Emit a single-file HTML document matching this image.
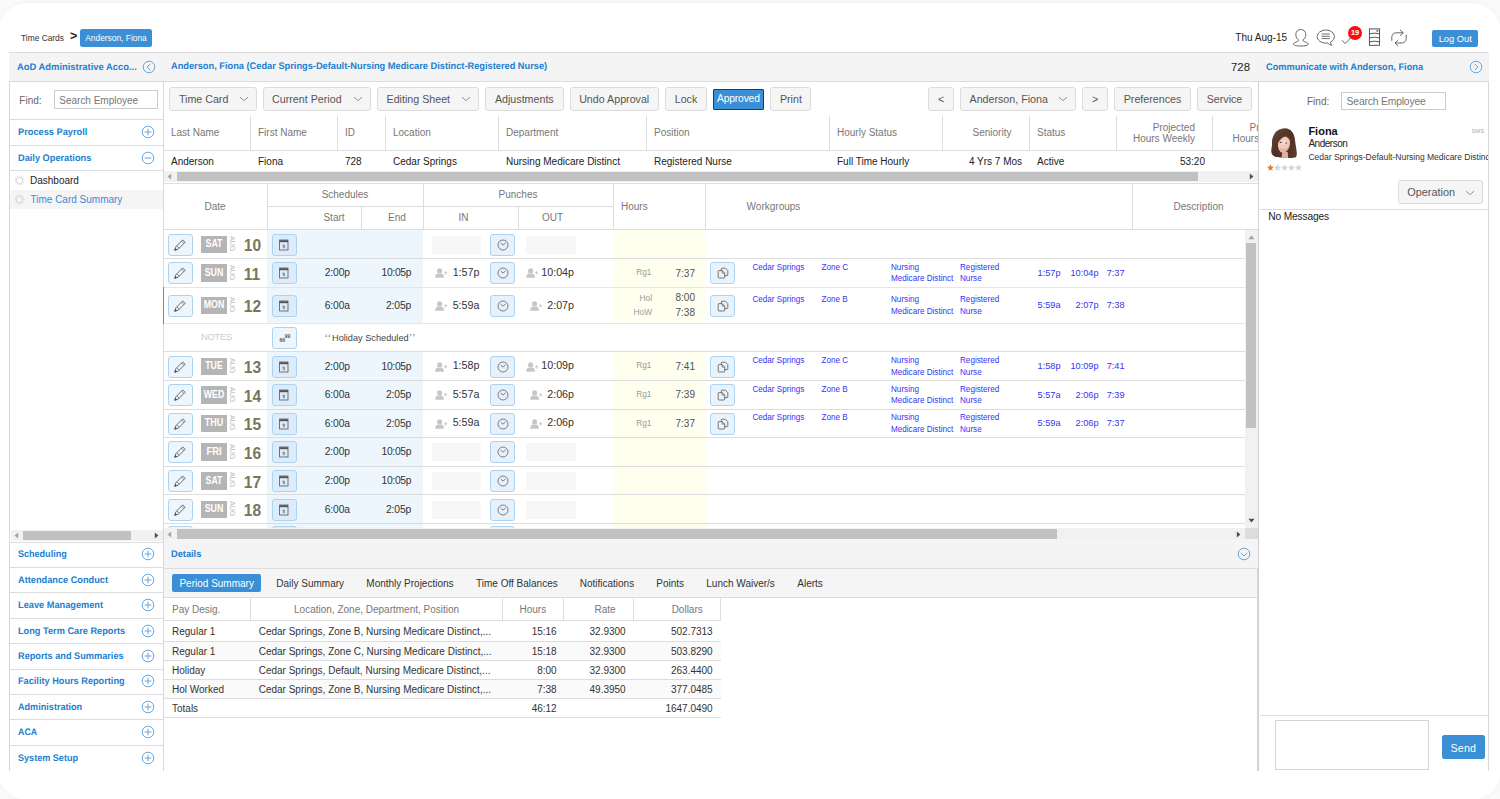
<!DOCTYPE html>
<html lang="en"><head><meta charset="utf-8"><title>Time Cards - Anderson, Fiona</title>
<style>html,body{margin:0;padding:0}body{width:1500px;height:799px;overflow:hidden;background:#fafafa;font-family:"Liberation Sans", sans-serif;position:relative}#card{position:absolute;left:-2px;top:3px;width:1503px;height:797px;background:#fff;border-radius:30px;box-shadow:0 0 7px rgba(0,0,0,.045)}div{box-sizing:content-box}</style></head><body>
<div id="card"></div>
<div style="position:absolute;top:31.00px;line-height:14px;font-size:8.4px;color:#333;white-space:nowrap;left:21.00px;">Time Cards</div>
<div style="position:absolute;top:29.20px;line-height:14px;font-size:12.5px;color:#222;white-space:nowrap;font-weight:bold;left:70.00px;">&gt;</div>
<div style="position:absolute;left:80.00px;top:29.00px;width:72.00px;height:18.40px;background:#3a8fd6;border-radius:2.5px;"></div>
<div style="position:absolute;top:31.30px;line-height:14px;font-size:8.4px;color:#fff;white-space:nowrap;left:-84.00px;width:400px;text-align:center;">Anderson, Fiona</div>
<div style="position:absolute;top:31.20px;line-height:14px;font-size:10px;color:#222;white-space:nowrap;left:1235.30px;">Thu Aug-15</div>
<svg style="position:absolute;left:1292.00px;top:28.50px;" width="17" height="18" viewBox="0 0 17 18"><path d="M8.800 0.500C12 0.500 13.800 2.800 13.800 5.600C13.800 8.200 12.400 10 11.200 10.600V11.600C11.200 12.200 12 12.500 13.400 13C15.200 13.600 16.200 14.300 16.200 15.200C16.200 16.400 13 17 8.800 17C4.600 17 1.400 16.400 1.400 15.200C1.400 14.300 2.400 13.600 4.200 13C5.600 12.500 6.400 12.200 6.400 11.600V10.600C5.200 10 3.800 8.200 3.800 5.600C3.800 2.800 5.600 0.500 8.800 0.500Z" fill="none" stroke="#555" stroke-width="0.9"/></svg>
<svg style="position:absolute;left:1315.50px;top:28.50px;" width="20" height="18" viewBox="0 0 20 18"><g fill="none" stroke="#555" stroke-width="0.9"><path d="M9.800 1.100c4.800 0 8.600 2.900 8.600 6.500 0 2.300-1.500 4.300-3.800 5.500 0 1.200 0.300 2.300 1.100 3.200-1.600-0.300-3-1.100-3.900-2.300-0.600 0.100-1.300 0.100-2 0.100-4.800 0-8.600-2.900-8.600-6.500s3.800-6.500 8.600-6.500z"/><path d="M5.500 5h8.400M5.500 7.300h8.400M5.500 9.600h8.400" stroke-width="0.85"/></g></svg>
<svg style="position:absolute;left:1341.00px;top:36.00px;" width="12" height="9" viewBox="0 0 12 9"><path d="M1 4.200L4.200 7.600L10.600 0.800" fill="none" stroke="#555" stroke-width="0.9"/></svg>
<div style="position:absolute;left:1348.00px;top:25.90px;width:14.00px;height:14.00px;background:#fb0d12;border-radius:50%;"></div>
<div style="position:absolute;top:26.20px;line-height:14px;font-size:7.4px;color:#fff;white-space:nowrap;font-weight:bold;left:1155.00px;width:400px;text-align:center;">19</div>
<svg style="position:absolute;left:1368.00px;top:28.20px;" width="13" height="18" viewBox="0 0 13 18"><g fill="none" stroke="#444" stroke-width="0.9"><rect x="1.400" y="0.900" width="10.200" height="16.400"/><path d="M1.400 5.800q5.100-1.400 10.200 0M1.400 9.900q5.100-1.400 10.200 0M1.400 13.900q5.100-1.400 10.200 0"/><path d="M8.400 2.900h1.900" stroke-width="1.100" stroke="#222"/></g></svg>
<svg style="position:absolute;left:1390.00px;top:28.50px;" width="18" height="18" viewBox="0 0 18 18"><g fill="none" stroke="#555" stroke-width="0.9" stroke-linecap="round" stroke-linejoin="round"><path d="M1.800 11.400V8.200a4.400 4.400 0 0 1 4.400-4.400h6.600"/><path d="M10.300 1.100l2.900 2.700-2.900 2.700"/><path d="M16.200 6.200v3.400a4.400 4.400 0 0 1-4.400 4.400H5.400"/><path d="M7.900 11.300l-2.900 2.700 2.900 2.700"/></g></svg>
<div style="position:absolute;left:1432.00px;top:30.30px;width:46.00px;height:17.00px;background:#3a8fd6;border-radius:2px;"></div>
<div style="position:absolute;top:31.90px;line-height:14px;font-size:9.3px;color:#fff;white-space:nowrap;left:1255.20px;width:400px;text-align:center;">Log Out</div>
<div style="position:absolute;left:9.00px;top:52.00px;width:1480.00px;height:29.00px;background:#f4f4f4;border-top:1px solid #ddd;box-sizing:border-box;"></div>
<div style="position:absolute;top:60.50px;line-height:14px;font-size:9.6px;color:#2180d1;white-space:nowrap;font-weight:bold;text-rendering:geometricPrecision;transform:scaleX(0.978);transform-origin:0 50%;left:16.70px;">AoD Administrative Acco...</div>
<svg style="position:absolute;left:142.40px;top:59.80px;" width="14" height="14" viewBox="0 0 14 14"><g fill="none" stroke="#6aa5db" stroke-width="1"><circle cx="7" cy="7" r="5.800"/><path d="M8.3 3.8L5.2 7l3.1 3.2"/></g></svg>
<div style="position:absolute;top:60.30px;line-height:14px;font-size:9.6px;color:#2180d1;white-space:nowrap;font-weight:bold;text-rendering:geometricPrecision;transform:scaleX(0.964);transform-origin:0 50%;left:171.00px;">Anderson, Fiona (Cedar Springs-Default-Nursing Medicare Distinct-Registered Nurse)</div>
<div style="position:absolute;top:59.80px;line-height:14px;font-size:11.4px;color:#222;white-space:nowrap;left:850.00px;width:400px;text-align:right;">728</div>
<div style="position:absolute;top:60.50px;line-height:14px;font-size:9.6px;color:#2180d1;white-space:nowrap;font-weight:bold;text-rendering:geometricPrecision;transform:scaleX(0.962);transform-origin:0 50%;left:1266.00px;">Communicate with Anderson, Fiona</div>
<svg style="position:absolute;left:1468.60px;top:59.90px;" width="14" height="14" viewBox="0 0 14 14"><g fill="none" stroke="#6aa5db" stroke-width="1"><circle cx="7" cy="7" r="5.800"/><path d="M5.7 3.8L8.8 7l-3.1 3.2"/></g></svg>
<div style="position:absolute;left:9.00px;top:81.00px;width:154.60px;height:689.50px;box-sizing:border-box;border:1px solid #d8d8d8;border-bottom:none;background:#fff;"></div>
<div style="position:absolute;top:93.50px;line-height:14px;font-size:10px;color:#666;white-space:nowrap;left:19.30px;">Find:</div>
<div style="position:absolute;left:53.60px;top:90.30px;width:104.20px;height:18.40px;box-sizing:border-box;border:1px solid #ccc;background:#fff;"></div>
<div style="position:absolute;top:93.60px;line-height:14px;font-size:10px;color:#777;white-space:nowrap;letter-spacing:-0.010px;left:59.30px;">Search Employee</div>
<div style="position:absolute;left:10.00px;top:119.40px;width:153.00px;height:1.00px;background:#ddd;"></div>
<div style="position:absolute;top:126.10px;line-height:14px;font-size:9.6px;color:#2180d1;white-space:nowrap;font-weight:bold;text-rendering:geometricPrecision;transform:scaleX(0.962);transform-origin:0 50%;left:17.80px;">Process Payroll</div>
<svg style="position:absolute;left:141.40px;top:125.20px;" width="14" height="14" viewBox="0 0 14 14"><g fill="none" stroke="#6aa5db" stroke-width="1"><circle cx="7" cy="7" r="5.800"/><path d="M3.6 7h6.8M7 3.6v6.8"/></g></svg>
<div style="position:absolute;left:10.00px;top:144.80px;width:153.00px;height:1.00px;background:#ddd;"></div>
<div style="position:absolute;top:151.50px;line-height:14px;font-size:9.6px;color:#2180d1;white-space:nowrap;font-weight:bold;text-rendering:geometricPrecision;transform:scaleX(0.961);transform-origin:0 50%;left:17.80px;">Daily Operations</div>
<svg style="position:absolute;left:141.40px;top:150.60px;" width="14" height="14" viewBox="0 0 14 14"><g fill="none" stroke="#6aa5db" stroke-width="1"><circle cx="7" cy="7" r="5.800"/><path d="M3.6 7h6.8"/></g></svg>
<div style="position:absolute;left:10.00px;top:170.20px;width:153.00px;height:1.00px;background:#ddd;"></div>
<svg style="position:absolute;left:13.50px;top:174.50px;" width="11" height="11" viewBox="0 0 11 11"><g fill="none" stroke="#c8c8c8" stroke-width="0.7"><circle cx="5.500" cy="5.500" r="3.200"/><path d="M5.500 0.600v1.400" transform="rotate(0 5.500 5.500)"/><path d="M5.500 0.600v1.400" transform="rotate(30 5.500 5.500)"/><path d="M5.500 0.600v1.400" transform="rotate(60 5.500 5.500)"/><path d="M5.500 0.600v1.400" transform="rotate(90 5.500 5.500)"/><path d="M5.500 0.600v1.400" transform="rotate(120 5.500 5.500)"/><path d="M5.500 0.600v1.400" transform="rotate(150 5.500 5.500)"/><path d="M5.500 0.600v1.400" transform="rotate(180 5.500 5.500)"/><path d="M5.500 0.600v1.400" transform="rotate(210 5.500 5.500)"/><path d="M5.500 0.600v1.400" transform="rotate(240 5.500 5.500)"/><path d="M5.500 0.600v1.400" transform="rotate(270 5.500 5.500)"/><path d="M5.500 0.600v1.400" transform="rotate(300 5.500 5.500)"/><path d="M5.500 0.600v1.400" transform="rotate(330 5.500 5.500)"/></g></svg>
<div style="position:absolute;top:173.90px;line-height:14px;font-size:10px;color:#222;white-space:nowrap;left:30.00px;">Dashboard</div>
<div style="position:absolute;left:10.00px;top:190.00px;width:153.00px;height:19.00px;background:#f5f5f5;"></div>
<svg style="position:absolute;left:13.50px;top:193.80px;" width="11" height="11" viewBox="0 0 11 11"><g fill="none" stroke="#c8c8c8" stroke-width="0.7"><circle cx="5.500" cy="5.500" r="3.200"/><path d="M5.500 0.600v1.400" transform="rotate(0 5.500 5.500)"/><path d="M5.500 0.600v1.400" transform="rotate(30 5.500 5.500)"/><path d="M5.500 0.600v1.400" transform="rotate(60 5.500 5.500)"/><path d="M5.500 0.600v1.400" transform="rotate(90 5.500 5.500)"/><path d="M5.500 0.600v1.400" transform="rotate(120 5.500 5.500)"/><path d="M5.500 0.600v1.400" transform="rotate(150 5.500 5.500)"/><path d="M5.500 0.600v1.400" transform="rotate(180 5.500 5.500)"/><path d="M5.500 0.600v1.400" transform="rotate(210 5.500 5.500)"/><path d="M5.500 0.600v1.400" transform="rotate(240 5.500 5.500)"/><path d="M5.500 0.600v1.400" transform="rotate(270 5.500 5.500)"/><path d="M5.500 0.600v1.400" transform="rotate(300 5.500 5.500)"/><path d="M5.500 0.600v1.400" transform="rotate(330 5.500 5.500)"/></g></svg>
<div style="position:absolute;top:193.30px;line-height:14px;font-size:10px;color:#3b89d5;white-space:nowrap;left:30.50px;">Time Card Summary</div>
<div style="position:absolute;left:10.50px;top:529.60px;width:152.00px;height:11.00px;background:#f1f1f1;"></div>
<div style="position:absolute;left:23.00px;top:530.60px;width:108.00px;height:9.00px;background:#c1c1c1;"></div>
<svg style="position:absolute;left:14.00px;top:531.60px;" width="5" height="7" viewBox="0 0 5 7"><path d="M4.200 0.400L0.600 3.500l3.600 3.100z" fill="#a3a3a3"/></svg>
<svg style="position:absolute;left:153.60px;top:531.60px;" width="5" height="7" viewBox="0 0 5 7"><path d="M0.800 0.400L4.400 3.500l-3.600 3.100z" fill="#505050"/></svg>
<div style="position:absolute;left:10.00px;top:541.60px;width:153.00px;height:1.00px;background:#ddd;"></div>
<div style="position:absolute;top:548.30px;line-height:14px;font-size:9.6px;color:#2180d1;white-space:nowrap;font-weight:bold;text-rendering:geometricPrecision;transform:scaleX(0.942);transform-origin:0 50%;left:17.80px;">Scheduling</div>
<svg style="position:absolute;left:141.40px;top:547.40px;" width="14" height="14" viewBox="0 0 14 14"><g fill="none" stroke="#6aa5db" stroke-width="1"><circle cx="7" cy="7" r="5.800"/><path d="M3.6 7h6.8M7 3.6v6.8"/></g></svg>
<div style="position:absolute;left:10.00px;top:567.00px;width:153.00px;height:1.00px;background:#ddd;"></div>
<div style="position:absolute;top:573.70px;line-height:14px;font-size:9.6px;color:#2180d1;white-space:nowrap;font-weight:bold;text-rendering:geometricPrecision;transform:scaleX(0.960);transform-origin:0 50%;left:17.80px;">Attendance Conduct</div>
<svg style="position:absolute;left:141.40px;top:572.80px;" width="14" height="14" viewBox="0 0 14 14"><g fill="none" stroke="#6aa5db" stroke-width="1"><circle cx="7" cy="7" r="5.800"/><path d="M3.6 7h6.8M7 3.6v6.8"/></g></svg>
<div style="position:absolute;left:10.00px;top:592.40px;width:153.00px;height:1.00px;background:#ddd;"></div>
<div style="position:absolute;top:599.10px;line-height:14px;font-size:9.6px;color:#2180d1;white-space:nowrap;font-weight:bold;text-rendering:geometricPrecision;transform:scaleX(0.961);transform-origin:0 50%;left:17.80px;">Leave Management</div>
<svg style="position:absolute;left:141.40px;top:598.20px;" width="14" height="14" viewBox="0 0 14 14"><g fill="none" stroke="#6aa5db" stroke-width="1"><circle cx="7" cy="7" r="5.800"/><path d="M3.6 7h6.8M7 3.6v6.8"/></g></svg>
<div style="position:absolute;left:10.00px;top:617.80px;width:153.00px;height:1.00px;background:#ddd;"></div>
<div style="position:absolute;top:624.50px;line-height:14px;font-size:9.6px;color:#2180d1;white-space:nowrap;font-weight:bold;text-rendering:geometricPrecision;transform:scaleX(0.959);transform-origin:0 50%;left:17.80px;">Long Term Care Reports</div>
<svg style="position:absolute;left:141.40px;top:623.60px;" width="14" height="14" viewBox="0 0 14 14"><g fill="none" stroke="#6aa5db" stroke-width="1"><circle cx="7" cy="7" r="5.800"/><path d="M3.6 7h6.8M7 3.6v6.8"/></g></svg>
<div style="position:absolute;left:10.00px;top:643.20px;width:153.00px;height:1.00px;background:#ddd;"></div>
<div style="position:absolute;top:649.90px;line-height:14px;font-size:9.6px;color:#2180d1;white-space:nowrap;font-weight:bold;text-rendering:geometricPrecision;transform:scaleX(0.957);transform-origin:0 50%;left:17.80px;">Reports and Summaries</div>
<svg style="position:absolute;left:141.40px;top:649.00px;" width="14" height="14" viewBox="0 0 14 14"><g fill="none" stroke="#6aa5db" stroke-width="1"><circle cx="7" cy="7" r="5.800"/><path d="M3.6 7h6.8M7 3.6v6.8"/></g></svg>
<div style="position:absolute;left:10.00px;top:668.60px;width:153.00px;height:1.00px;background:#ddd;"></div>
<div style="position:absolute;top:675.30px;line-height:14px;font-size:9.6px;color:#2180d1;white-space:nowrap;font-weight:bold;text-rendering:geometricPrecision;transform:scaleX(0.957);transform-origin:0 50%;left:17.80px;">Facility Hours Reporting</div>
<svg style="position:absolute;left:141.40px;top:674.40px;" width="14" height="14" viewBox="0 0 14 14"><g fill="none" stroke="#6aa5db" stroke-width="1"><circle cx="7" cy="7" r="5.800"/><path d="M3.6 7h6.8M7 3.6v6.8"/></g></svg>
<div style="position:absolute;left:10.00px;top:694.00px;width:153.00px;height:1.00px;background:#ddd;"></div>
<div style="position:absolute;top:700.70px;line-height:14px;font-size:9.6px;color:#2180d1;white-space:nowrap;font-weight:bold;text-rendering:geometricPrecision;transform:scaleX(0.948);transform-origin:0 50%;left:17.80px;">Administration</div>
<svg style="position:absolute;left:141.40px;top:699.80px;" width="14" height="14" viewBox="0 0 14 14"><g fill="none" stroke="#6aa5db" stroke-width="1"><circle cx="7" cy="7" r="5.800"/><path d="M3.6 7h6.8M7 3.6v6.8"/></g></svg>
<div style="position:absolute;left:10.00px;top:719.40px;width:153.00px;height:1.00px;background:#ddd;"></div>
<div style="position:absolute;top:726.10px;line-height:14px;font-size:9.6px;color:#2180d1;white-space:nowrap;font-weight:bold;text-rendering:geometricPrecision;transform:scaleX(0.923);transform-origin:0 50%;left:17.80px;">ACA</div>
<svg style="position:absolute;left:141.40px;top:725.20px;" width="14" height="14" viewBox="0 0 14 14"><g fill="none" stroke="#6aa5db" stroke-width="1"><circle cx="7" cy="7" r="5.800"/><path d="M3.6 7h6.8M7 3.6v6.8"/></g></svg>
<div style="position:absolute;left:10.00px;top:744.80px;width:153.00px;height:1.00px;background:#ddd;"></div>
<div style="position:absolute;top:751.50px;line-height:14px;font-size:9.6px;color:#2180d1;white-space:nowrap;font-weight:bold;text-rendering:geometricPrecision;transform:scaleX(0.946);transform-origin:0 50%;left:17.80px;">System Setup</div>
<svg style="position:absolute;left:141.40px;top:750.60px;" width="14" height="14" viewBox="0 0 14 14"><g fill="none" stroke="#6aa5db" stroke-width="1"><circle cx="7" cy="7" r="5.800"/><path d="M3.6 7h6.8M7 3.6v6.8"/></g></svg>
<div style="position:absolute;left:163.00px;top:81.00px;width:1.00px;height:689.50px;background:#d8d8d8;"></div>
<div style="position:absolute;left:163.00px;top:81.00px;width:1095.00px;height:1.00px;background:#ddd;"></div>
<div style="position:absolute;left:169.40px;top:87.00px;width:87.60px;height:23.60px;box-sizing:border-box;border:1px solid #dcdcdc;background:#f5f5f5;border-radius:3px;"></div>
<div style="position:absolute;top:92.00px;line-height:14px;font-size:10.7px;color:#555;white-space:nowrap;left:178.90px;">Time Card</div>
<svg style="position:absolute;left:239.00px;top:96.40px;" width="10" height="6" viewBox="0 0 10 6"><path d="M1 1.2L5 4.6L9 1.2" fill="none" stroke="#888" stroke-width="0.9"/></svg>
<div style="position:absolute;left:262.60px;top:87.00px;width:108.40px;height:23.60px;box-sizing:border-box;border:1px solid #dcdcdc;background:#f5f5f5;border-radius:3px;"></div>
<div style="position:absolute;top:92.00px;line-height:14px;font-size:10.7px;color:#555;white-space:nowrap;left:272.10px;">Current Period</div>
<svg style="position:absolute;left:353.00px;top:96.40px;" width="10" height="6" viewBox="0 0 10 6"><path d="M1 1.2L5 4.6L9 1.2" fill="none" stroke="#888" stroke-width="0.9"/></svg>
<div style="position:absolute;left:377.00px;top:87.00px;width:102.00px;height:23.60px;box-sizing:border-box;border:1px solid #dcdcdc;background:#f5f5f5;border-radius:3px;"></div>
<div style="position:absolute;top:92.00px;line-height:14px;font-size:10.7px;color:#555;white-space:nowrap;left:386.50px;">Editing Sheet</div>
<svg style="position:absolute;left:461.00px;top:96.40px;" width="10" height="6" viewBox="0 0 10 6"><path d="M1 1.2L5 4.6L9 1.2" fill="none" stroke="#888" stroke-width="0.9"/></svg>
<div style="position:absolute;left:485.00px;top:87.00px;width:78.60px;height:23.60px;box-sizing:border-box;border:1px solid #dcdcdc;background:#f5f5f5;border-radius:3px;"></div>
<div style="position:absolute;top:92.00px;line-height:14px;font-size:10.7px;color:#555;white-space:nowrap;left:324.30px;width:400px;text-align:center;">Adjustments</div>
<div style="position:absolute;left:569.60px;top:87.00px;width:89.20px;height:23.60px;box-sizing:border-box;border:1px solid #dcdcdc;background:#f5f5f5;border-radius:3px;"></div>
<div style="position:absolute;top:92.00px;line-height:14px;font-size:10.7px;color:#555;white-space:nowrap;left:414.20px;width:400px;text-align:center;">Undo Approval</div>
<div style="position:absolute;left:665.00px;top:87.00px;width:42.00px;height:23.60px;box-sizing:border-box;border:1px solid #dcdcdc;background:#f5f5f5;border-radius:3px;"></div>
<div style="position:absolute;top:92.00px;line-height:14px;font-size:10.7px;color:#555;white-space:nowrap;left:486.00px;width:400px;text-align:center;">Lock</div>
<div style="position:absolute;left:713.00px;top:89.00px;width:51.00px;height:21.00px;box-sizing:border-box;border:1px solid #2a3a4a;background:#3a8fd6;border-radius:1px;"></div>
<div style="position:absolute;top:92.40px;line-height:14px;font-size:10.3px;color:#fff;white-space:nowrap;letter-spacing:-0.185px;left:538.40px;width:400px;text-align:center;">Approved</div>
<div style="position:absolute;left:770.40px;top:87.00px;width:41.00px;height:23.60px;box-sizing:border-box;border:1px solid #dcdcdc;background:#f5f5f5;border-radius:3px;"></div>
<div style="position:absolute;top:92.00px;line-height:14px;font-size:10.7px;color:#555;white-space:nowrap;left:590.90px;width:400px;text-align:center;">Print</div>
<div style="position:absolute;left:928.40px;top:87.00px;width:25.20px;height:23.60px;box-sizing:border-box;border:1px solid #dcdcdc;background:#f5f5f5;border-radius:3px;"></div>
<div style="position:absolute;top:92.00px;line-height:14px;font-size:10.7px;color:#555;white-space:nowrap;left:741.00px;width:400px;text-align:center;">&lt;</div>
<div style="position:absolute;left:960.00px;top:87.00px;width:116.00px;height:23.60px;box-sizing:border-box;border:1px solid #dcdcdc;background:#f5f5f5;border-radius:3px;"></div>
<div style="position:absolute;top:92.00px;line-height:14px;font-size:10.7px;color:#555;white-space:nowrap;left:969.50px;">Anderson, Fiona</div>
<svg style="position:absolute;left:1058.00px;top:96.40px;" width="10" height="6" viewBox="0 0 10 6"><path d="M1 1.2L5 4.6L9 1.2" fill="none" stroke="#888" stroke-width="0.9"/></svg>
<div style="position:absolute;left:1082.40px;top:87.00px;width:25.20px;height:23.60px;box-sizing:border-box;border:1px solid #dcdcdc;background:#f5f5f5;border-radius:3px;"></div>
<div style="position:absolute;top:92.00px;line-height:14px;font-size:10.7px;color:#555;white-space:nowrap;left:895.00px;width:400px;text-align:center;">&gt;</div>
<div style="position:absolute;left:1114.00px;top:87.00px;width:77.00px;height:23.60px;box-sizing:border-box;border:1px solid #dcdcdc;background:#f5f5f5;border-radius:3px;"></div>
<div style="position:absolute;top:92.00px;line-height:14px;font-size:10.7px;color:#555;white-space:nowrap;left:952.50px;width:400px;text-align:center;">Preferences</div>
<div style="position:absolute;left:1197.20px;top:87.00px;width:54.60px;height:23.60px;box-sizing:border-box;border:1px solid #dcdcdc;background:#f5f5f5;border-radius:3px;"></div>
<div style="position:absolute;top:92.00px;line-height:14px;font-size:10.7px;color:#555;white-space:nowrap;left:1024.50px;width:400px;text-align:center;">Service</div>
<div style="position:absolute;top:126.00px;line-height:14px;font-size:10px;color:#777;white-space:nowrap;left:171.00px;">Last Name</div>
<div style="position:absolute;top:154.70px;line-height:14px;font-size:10px;color:#222;white-space:nowrap;left:171.00px;">Anderson</div>
<div style="position:absolute;left:250.00px;top:116.00px;width:1.00px;height:34.00px;background:#ddd;"></div>
<div style="position:absolute;top:126.00px;line-height:14px;font-size:10px;color:#777;white-space:nowrap;left:258.00px;">First Name</div>
<div style="position:absolute;top:154.70px;line-height:14px;font-size:10px;color:#222;white-space:nowrap;left:258.00px;">Fiona</div>
<div style="position:absolute;left:337.00px;top:116.00px;width:1.00px;height:34.00px;background:#ddd;"></div>
<div style="position:absolute;top:126.00px;line-height:14px;font-size:10px;color:#777;white-space:nowrap;left:345.00px;">ID</div>
<div style="position:absolute;top:154.70px;line-height:14px;font-size:10px;color:#222;white-space:nowrap;left:345.00px;">728</div>
<div style="position:absolute;left:385.00px;top:116.00px;width:1.00px;height:34.00px;background:#ddd;"></div>
<div style="position:absolute;top:126.00px;line-height:14px;font-size:10px;color:#777;white-space:nowrap;left:393.00px;">Location</div>
<div style="position:absolute;top:154.70px;line-height:14px;font-size:10px;color:#222;white-space:nowrap;left:393.00px;">Cedar Springs</div>
<div style="position:absolute;left:498.00px;top:116.00px;width:1.00px;height:34.00px;background:#ddd;"></div>
<div style="position:absolute;top:126.00px;line-height:14px;font-size:10px;color:#777;white-space:nowrap;left:506.00px;">Department</div>
<div style="position:absolute;top:154.70px;line-height:14px;font-size:10px;color:#222;white-space:nowrap;left:506.00px;">Nursing Medicare Distinct</div>
<div style="position:absolute;left:646.00px;top:116.00px;width:1.00px;height:34.00px;background:#ddd;"></div>
<div style="position:absolute;top:126.00px;line-height:14px;font-size:10px;color:#777;white-space:nowrap;left:654.00px;">Position</div>
<div style="position:absolute;top:154.70px;line-height:14px;font-size:10px;color:#222;white-space:nowrap;left:654.00px;">Registered Nurse</div>
<div style="position:absolute;left:829.00px;top:116.00px;width:1.00px;height:34.00px;background:#ddd;"></div>
<div style="position:absolute;top:126.00px;line-height:14px;font-size:10px;color:#777;white-space:nowrap;left:837.00px;">Hourly Status</div>
<div style="position:absolute;top:154.70px;line-height:14px;font-size:10px;color:#222;white-space:nowrap;left:837.00px;">Full Time Hourly</div>
<div style="position:absolute;left:942.00px;top:116.00px;width:1.00px;height:34.00px;background:#ddd;"></div>
<div style="position:absolute;top:126.00px;line-height:14px;font-size:10px;color:#777;white-space:nowrap;left:792.00px;width:400px;text-align:center;">Seniority</div>
<div style="position:absolute;top:154.70px;line-height:14px;font-size:10px;color:#222;white-space:nowrap;left:795.50px;width:400px;text-align:center;">4 Yrs 7 Mos</div>
<div style="position:absolute;left:1029.00px;top:116.00px;width:1.00px;height:34.00px;background:#ddd;"></div>
<div style="position:absolute;top:126.00px;line-height:14px;font-size:10px;color:#777;white-space:nowrap;left:1037.00px;">Status</div>
<div style="position:absolute;top:154.70px;line-height:14px;font-size:10px;color:#222;white-space:nowrap;left:1037.00px;">Active</div>
<div style="position:absolute;left:1116.00px;top:116.00px;width:1.00px;height:34.00px;background:#ddd;"></div>
<div style="position:absolute;left:1212.00px;top:116.00px;width:1.00px;height:34.00px;background:#ddd;"></div>
<div style="position:absolute;top:120.70px;line-height:14px;font-size:10px;color:#777;white-space:nowrap;left:795.00px;width:400px;text-align:right;">Projected</div>
<div style="position:absolute;top:132.10px;line-height:14px;font-size:10px;color:#777;white-space:nowrap;left:795.00px;width:400px;text-align:right;">Hours Weekly</div>
<div style="position:absolute;top:154.70px;line-height:14px;font-size:10px;color:#222;white-space:nowrap;left:805.00px;width:400px;text-align:right;">53:20</div>
<div style="position:absolute;left:1213px;top:116px;width:45px;height:34px;overflow:hidden">
<div style="position:absolute;top:4.70px;line-height:14px;font-size:10px;color:#777;white-space:nowrap;left:36.50px;">Pr</div>
<div style="position:absolute;top:16.10px;line-height:14px;font-size:10px;color:#777;white-space:nowrap;left:19.50px;">Hours</div>
</div>
<div style="position:absolute;left:163.00px;top:150.00px;width:1095.00px;height:1.00px;background:#ddd;"></div>
<div style="position:absolute;left:164.00px;top:171.00px;width:1094.00px;height:10.60px;background:#f1f1f1;"></div>
<div style="position:absolute;left:176.60px;top:172.00px;width:1021.40px;height:8.60px;background:#c1c1c1;"></div>
<svg style="position:absolute;left:166.50px;top:172.80px;" width="5" height="7" viewBox="0 0 5 7"><path d="M4.200 0.400L0.600 3.500l3.600 3.100z" fill="#a3a3a3"/></svg>
<svg style="position:absolute;left:1249.00px;top:172.80px;" width="5" height="7" viewBox="0 0 5 7"><path d="M0.800 0.400L4.400 3.500l-3.600 3.100z" fill="#505050"/></svg>
<div style="position:absolute;left:163.00px;top:183.00px;width:1095.00px;height:1.00px;background:#ddd;"></div>
<div style="position:absolute;left:267.00px;top:183.00px;width:1.00px;height:46.40px;background:#ddd;"></div>
<div style="position:absolute;left:423.00px;top:183.00px;width:1.00px;height:46.40px;background:#ddd;"></div>
<div style="position:absolute;left:613.00px;top:183.00px;width:1.00px;height:46.40px;background:#ddd;"></div>
<div style="position:absolute;left:705.40px;top:183.00px;width:1.00px;height:46.40px;background:#ddd;"></div>
<div style="position:absolute;left:1131.60px;top:183.00px;width:1.00px;height:46.40px;background:#ddd;"></div>
<div style="position:absolute;left:267.00px;top:206.00px;width:346.00px;height:1.00px;background:#ddd;"></div>
<div style="position:absolute;left:361.00px;top:206.00px;width:1.00px;height:23.40px;background:#ddd;"></div>
<div style="position:absolute;left:518.00px;top:206.00px;width:1.00px;height:23.40px;background:#ddd;"></div>
<div style="position:absolute;left:163.00px;top:229.40px;width:1095.00px;height:1.00px;background:#ddd;"></div>
<div style="position:absolute;top:200.10px;line-height:14px;font-size:10px;color:#777;white-space:nowrap;left:15.00px;width:400px;text-align:center;">Date</div>
<div style="position:absolute;top:188.30px;line-height:14px;font-size:10px;color:#777;white-space:nowrap;left:145.00px;width:400px;text-align:center;">Schedules</div>
<div style="position:absolute;top:211.00px;line-height:14px;font-size:10px;color:#777;white-space:nowrap;left:134.00px;width:400px;text-align:center;">Start</div>
<div style="position:absolute;top:211.00px;line-height:14px;font-size:10px;color:#777;white-space:nowrap;left:197.00px;width:400px;text-align:center;">End</div>
<div style="position:absolute;top:188.30px;line-height:14px;font-size:10px;color:#777;white-space:nowrap;left:318.00px;width:400px;text-align:center;">Punches</div>
<div style="position:absolute;top:211.00px;line-height:14px;font-size:10px;color:#777;white-space:nowrap;left:263.50px;width:400px;text-align:center;">IN</div>
<div style="position:absolute;top:211.00px;line-height:14px;font-size:10px;color:#777;white-space:nowrap;left:352.50px;width:400px;text-align:center;">OUT</div>
<div style="position:absolute;top:200.10px;line-height:14px;font-size:10px;color:#777;white-space:nowrap;left:621.00px;">Hours</div>
<div style="position:absolute;top:200.10px;line-height:14px;font-size:10px;color:#777;white-space:nowrap;left:746.60px;">Workgroups</div>
<div style="position:absolute;top:200.10px;line-height:14px;font-size:10px;color:#777;white-space:nowrap;left:1173.50px;">Description</div>
<div style="position:absolute;left:164px;top:230px;width:1081px;height:297.600px;overflow:hidden">
<div style="position:absolute;left:103.40px;top:0.00px;width:155.60px;height:300.00px;background:#eef6fd;"></div>
<div style="position:absolute;left:449.00px;top:0.00px;width:92.80px;height:300.00px;background:#fffff0;"></div>
<div style="position:absolute;left:4.00px;top:4.00px;width:25.00px;height:22.00px;box-sizing:border-box;border:1px solid #add3f1;background:#eef6fd;border-radius:3px;"></div>
<svg style="position:absolute;left:10.30px;top:8.80px;" width="12" height="12" viewBox="0 0 12 12"><g fill="none" stroke="#555" stroke-width="0.85" stroke-linejoin="round"><path d="M8.700 0.900l2.400 2.400L4.300 10.100l-3.500 1.100 1.100-3.500z"/><path d="M7.500 2.100l2.400 2.400M2.900 6.900l2.200 2.200" stroke-width="0.700"/><path d="M0.800 11.200l0.600-1.900 1.300 1.300z" fill="#555"/></g></svg>
<div style="position:absolute;left:37.00px;top:5.60px;width:26.00px;height:17.50px;background:#b5b5b5;"></div>
<div style="position:absolute;top:7.10px;line-height:14px;font-size:10px;color:#fff;white-space:nowrap;font-weight:bold;transform:scaleX(0.882);transform-origin:50% 50%;left:-150.00px;width:400px;text-align:center;">SAT</div>
<div style="position:absolute;left:65.20px;top:5.90px;width:7px;height:17px;writing-mode:vertical-rl;font-size:7.400px;line-height:7px;color:#bdbdbd;white-space:nowrap;letter-spacing:-0.200px">AUG</div>
<div style="position:absolute;top:7.10px;line-height:18px;font-size:15.6px;color:#77775a;white-space:nowrap;font-weight:bold;left:79.80px;">10</div>
<div style="position:absolute;left:107.60px;top:4.00px;width:25.00px;height:22.00px;box-sizing:border-box;border:1px solid #add3f1;background:#dcecfa;border-radius:3px;"></div>
<svg style="position:absolute;left:115.40px;top:9.30px;" width="10" height="12" viewBox="0 0 10 12"><g fill="none" stroke="#555" stroke-width="0.800"><rect x="0.600" y="1" width="8.400" height="10"/><path d="M0.600 2.200h8.400" stroke-width="2"/><path d="M4.300 5.800v3.400M5.500 5.800v3.400" stroke-width="0.600"/><path d="M3.400 6.600l0.900-0.800" stroke-width="0.600"/></g></svg>
<div style="position:absolute;left:326.00px;top:4.00px;width:25.00px;height:22.00px;box-sizing:border-box;border:1px solid #add3f1;background:#e6f1fc;border-radius:3px;"></div>
<svg style="position:absolute;left:332.50px;top:9.20px;" width="12" height="12" viewBox="0 0 12 12"><g fill="none" stroke="#6c6c6c" stroke-width="0.85"><circle cx="6" cy="6" r="5"/><path d="M3.600 4.100L6 6.100l2.600-2.200"/></g></svg>
<div style="position:absolute;left:267.60px;top:5.50px;width:49.40px;height:18.20px;background:#f7f7f7;"></div>
<div style="position:absolute;left:362.00px;top:5.50px;width:49.60px;height:18.20px;background:#f7f7f7;"></div>
<div style="position:absolute;left:4.00px;top:32.00px;width:25.00px;height:22.00px;box-sizing:border-box;border:1px solid #add3f1;background:#eef6fd;border-radius:3px;"></div>
<svg style="position:absolute;left:10.30px;top:36.80px;" width="12" height="12" viewBox="0 0 12 12"><g fill="none" stroke="#555" stroke-width="0.85" stroke-linejoin="round"><path d="M8.700 0.900l2.400 2.400L4.300 10.100l-3.500 1.100 1.100-3.500z"/><path d="M7.500 2.100l2.400 2.400M2.900 6.900l2.200 2.200" stroke-width="0.700"/><path d="M0.800 11.200l0.600-1.900 1.300 1.300z" fill="#555"/></g></svg>
<div style="position:absolute;left:37.00px;top:34.40px;width:26.00px;height:17.50px;background:#b5b5b5;"></div>
<div style="position:absolute;top:35.90px;line-height:14px;font-size:10px;color:#fff;white-space:nowrap;font-weight:bold;transform:scaleX(0.885);transform-origin:50% 50%;left:-150.00px;width:400px;text-align:center;">SUN</div>
<div style="position:absolute;left:65.20px;top:34.70px;width:7px;height:17px;writing-mode:vertical-rl;font-size:7.400px;line-height:7px;color:#bdbdbd;white-space:nowrap;letter-spacing:-0.200px">AUG</div>
<div style="position:absolute;top:35.90px;line-height:18px;font-size:15.6px;color:#77775a;white-space:nowrap;font-weight:bold;left:79.80px;">11</div>
<div style="position:absolute;left:107.60px;top:32.00px;width:25.00px;height:22.00px;box-sizing:border-box;border:1px solid #add3f1;background:#dcecfa;border-radius:3px;"></div>
<svg style="position:absolute;left:115.40px;top:37.30px;" width="10" height="12" viewBox="0 0 10 12"><g fill="none" stroke="#555" stroke-width="0.800"><rect x="0.600" y="1" width="8.400" height="10"/><path d="M0.600 2.200h8.400" stroke-width="2"/><path d="M4.300 5.800v3.400M5.500 5.800v3.400" stroke-width="0.600"/><path d="M3.400 6.600l0.900-0.800" stroke-width="0.600"/></g></svg>
<div style="position:absolute;top:36.30px;line-height:14px;font-size:10.3px;color:#333;white-space:nowrap;letter-spacing:-0.095px;left:-214.00px;width:400px;text-align:right;">2:00p</div>
<div style="position:absolute;top:36.30px;line-height:14px;font-size:10.3px;color:#333;white-space:nowrap;letter-spacing:-0.300px;left:-152.80px;width:400px;text-align:right;">10:05p</div>
<div style="position:absolute;left:326.00px;top:32.00px;width:25.00px;height:22.00px;box-sizing:border-box;border:1px solid #add3f1;background:#e6f1fc;border-radius:3px;"></div>
<svg style="position:absolute;left:332.50px;top:37.20px;" width="12" height="12" viewBox="0 0 12 12"><g fill="none" stroke="#6c6c6c" stroke-width="0.85"><circle cx="6" cy="6" r="5"/><path d="M3.600 4.100L6 6.100l2.600-2.200"/></g></svg>
<svg style="position:absolute;left:271.00px;top:38.30px;" width="13" height="10" viewBox="0 0 13 10"><g fill="#c6c6c6"><ellipse cx="4.600" cy="2.900" rx="2.500" ry="2.700"/><path d="M0.200 9.200c0-2.400 1.500-3.500 2.900-3.700 0.900 0.600 2.100 0.600 3 0 1.400 0.200 2.900 1.300 2.900 3.700 0 0.300-0.200 0.500-0.500 0.500H0.700c-0.300 0-0.500-0.200-0.500-0.500z"/><path d="M8.900 4.800h3.400M10.600 3.100v3.400" stroke="#c9c9c9" stroke-width="1" fill="none"/></g></svg>
<div style="position:absolute;top:35.00px;line-height:14px;font-size:10.7px;color:#333;white-space:nowrap;left:-84.60px;width:400px;text-align:right;">1:57p</div>
<svg style="position:absolute;left:362.00px;top:38.30px;" width="13" height="10" viewBox="0 0 13 10"><g fill="#c6c6c6"><ellipse cx="4.600" cy="2.900" rx="2.500" ry="2.700"/><path d="M0.200 9.200c0-2.400 1.500-3.500 2.900-3.700 0.900 0.600 2.100 0.600 3 0 1.400 0.200 2.900 1.300 2.900 3.700 0 0.300-0.200 0.500-0.500 0.500H0.700c-0.300 0-0.500-0.200-0.500-0.500z"/><path d="M8.900 4.800h3.400M10.600 3.100v3.400" stroke="#c9c9c9" stroke-width="1" fill="none"/></g></svg>
<div style="position:absolute;top:35.00px;line-height:14px;font-size:10.7px;color:#333;white-space:nowrap;left:10.00px;width:400px;text-align:right;">10:04p</div>
<div style="position:absolute;top:35.20px;line-height:14px;font-size:8.3px;color:#999;white-space:nowrap;left:87.40px;width:400px;text-align:right;">Rg1</div>
<div style="position:absolute;top:36.50px;line-height:14px;font-size:10px;color:#505050;white-space:nowrap;left:131.00px;width:400px;text-align:right;">7:37</div>
<div style="position:absolute;left:546.40px;top:32.00px;width:25.00px;height:22.00px;box-sizing:border-box;border:1px solid #add3f1;background:#e9f3fc;border-radius:3px;"></div>
<svg style="position:absolute;left:553.10px;top:37.00px;" width="12" height="12" viewBox="0 0 12 12"><g fill="none" stroke="#5e5e5e" stroke-width="0.85" stroke-linejoin="round"><path d="M4.300 3.400V2a0.800 0.800 0 0 1 0.800-0.800h3.300l2.400 2.400v4.200a0.800 0.800 0 0 1-0.800 0.800H7.700"/><path d="M1.200 4.400a0.800 0.800 0 0 1 0.800-0.800h3.200l2.500 2.500v4.100a0.800 0.800 0 0 1-0.800 0.800H2a0.800 0.800 0 0 1-0.800-0.800z"/><path d="M5.200 3.600v2.500h2.500" stroke-width="0.700"/></g></svg>
<div style="position:absolute;top:30.90px;line-height:14px;font-size:8.15px;color:#3434f8;white-space:nowrap;left:588.40px;">Cedar Springs</div>
<div style="position:absolute;top:30.90px;line-height:14px;font-size:8.15px;color:#3434f8;white-space:nowrap;left:657.60px;">Zone C</div>
<div style="position:absolute;top:30.90px;line-height:14px;font-size:8.15px;color:#3434f8;white-space:nowrap;left:727.00px;">Nursing</div>
<div style="position:absolute;top:42.30px;line-height:14px;font-size:8.15px;color:#3434f8;white-space:nowrap;left:727.00px;">Medicare Distinct</div>
<div style="position:absolute;top:30.90px;line-height:14px;font-size:8.15px;color:#3434f8;white-space:nowrap;left:796.00px;">Registered</div>
<div style="position:absolute;top:42.30px;line-height:14px;font-size:8.15px;color:#3434f8;white-space:nowrap;left:796.00px;">Nurse</div>
<div style="position:absolute;top:35.90px;line-height:14px;font-size:9.2px;color:#3434f8;white-space:nowrap;left:496.60px;width:400px;text-align:right;">1:57p</div>
<div style="position:absolute;top:35.90px;line-height:14px;font-size:9.2px;color:#3434f8;white-space:nowrap;left:534.60px;width:400px;text-align:right;">10:04p</div>
<div style="position:absolute;top:35.90px;line-height:14px;font-size:9.2px;color:#3434f8;white-space:nowrap;left:560.60px;width:400px;text-align:right;">7:37</div>
<div style="position:absolute;left:4.00px;top:65.00px;width:25.00px;height:22.00px;box-sizing:border-box;border:1px solid #add3f1;background:#eef6fd;border-radius:3px;"></div>
<svg style="position:absolute;left:10.30px;top:69.80px;" width="12" height="12" viewBox="0 0 12 12"><g fill="none" stroke="#555" stroke-width="0.85" stroke-linejoin="round"><path d="M8.700 0.900l2.400 2.400L4.300 10.100l-3.500 1.100 1.100-3.500z"/><path d="M7.500 2.100l2.400 2.400M2.900 6.900l2.200 2.200" stroke-width="0.700"/><path d="M0.800 11.200l0.600-1.900 1.300 1.300z" fill="#555"/></g></svg>
<div style="position:absolute;left:37.00px;top:66.90px;width:26.00px;height:17.50px;background:#b5b5b5;"></div>
<div style="position:absolute;top:68.40px;line-height:14px;font-size:10px;color:#fff;white-space:nowrap;font-weight:bold;transform:scaleX(0.882);transform-origin:50% 50%;left:-150.00px;width:400px;text-align:center;">MON</div>
<div style="position:absolute;left:65.20px;top:67.20px;width:7px;height:17px;writing-mode:vertical-rl;font-size:7.400px;line-height:7px;color:#bdbdbd;white-space:nowrap;letter-spacing:-0.200px">AUG</div>
<div style="position:absolute;top:68.40px;line-height:18px;font-size:15.6px;color:#77775a;white-space:nowrap;font-weight:bold;left:79.80px;">12</div>
<div style="position:absolute;left:107.60px;top:65.00px;width:25.00px;height:22.00px;box-sizing:border-box;border:1px solid #add3f1;background:#dcecfa;border-radius:3px;"></div>
<svg style="position:absolute;left:115.40px;top:70.30px;" width="10" height="12" viewBox="0 0 10 12"><g fill="none" stroke="#555" stroke-width="0.800"><rect x="0.600" y="1" width="8.400" height="10"/><path d="M0.600 2.200h8.400" stroke-width="2"/><path d="M4.300 5.800v3.400M5.500 5.800v3.400" stroke-width="0.600"/><path d="M3.400 6.600l0.900-0.800" stroke-width="0.600"/></g></svg>
<div style="position:absolute;top:68.80px;line-height:14px;font-size:10.3px;color:#333;white-space:nowrap;letter-spacing:-0.095px;left:-214.00px;width:400px;text-align:right;">6:00a</div>
<div style="position:absolute;top:68.80px;line-height:14px;font-size:10.3px;color:#333;white-space:nowrap;letter-spacing:-0.095px;left:-152.80px;width:400px;text-align:right;">2:05p</div>
<div style="position:absolute;left:326.00px;top:65.00px;width:25.00px;height:22.00px;box-sizing:border-box;border:1px solid #add3f1;background:#e6f1fc;border-radius:3px;"></div>
<svg style="position:absolute;left:332.50px;top:70.20px;" width="12" height="12" viewBox="0 0 12 12"><g fill="none" stroke="#6c6c6c" stroke-width="0.85"><circle cx="6" cy="6" r="5"/><path d="M3.600 4.100L6 6.100l2.600-2.200"/></g></svg>
<svg style="position:absolute;left:271.00px;top:70.80px;" width="13" height="10" viewBox="0 0 13 10"><g fill="#c6c6c6"><ellipse cx="4.600" cy="2.900" rx="2.500" ry="2.700"/><path d="M0.200 9.200c0-2.400 1.500-3.500 2.900-3.700 0.900 0.600 2.100 0.600 3 0 1.400 0.200 2.900 1.300 2.900 3.700 0 0.300-0.200 0.500-0.500 0.500H0.700c-0.300 0-0.500-0.200-0.500-0.500z"/><path d="M8.900 4.800h3.400M10.600 3.100v3.400" stroke="#c9c9c9" stroke-width="1" fill="none"/></g></svg>
<div style="position:absolute;top:67.50px;line-height:14px;font-size:10.7px;color:#333;white-space:nowrap;left:-84.60px;width:400px;text-align:right;">5:59a</div>
<svg style="position:absolute;left:365.60px;top:70.80px;" width="13" height="10" viewBox="0 0 13 10"><g fill="#c6c6c6"><ellipse cx="4.600" cy="2.900" rx="2.500" ry="2.700"/><path d="M0.200 9.200c0-2.400 1.500-3.500 2.900-3.700 0.900 0.600 2.100 0.600 3 0 1.400 0.200 2.900 1.300 2.900 3.700 0 0.300-0.200 0.500-0.500 0.500H0.700c-0.300 0-0.500-0.200-0.500-0.500z"/><path d="M8.900 4.800h3.400M10.600 3.100v3.400" stroke="#c9c9c9" stroke-width="1" fill="none"/></g></svg>
<div style="position:absolute;top:67.50px;line-height:14px;font-size:10.7px;color:#333;white-space:nowrap;left:10.00px;width:400px;text-align:right;">2:07p</div>
<div style="position:absolute;top:61.00px;line-height:14px;font-size:8.3px;color:#999;white-space:nowrap;left:88.00px;width:400px;text-align:right;">Hol</div>
<div style="position:absolute;top:61.40px;line-height:14px;font-size:10px;color:#505050;white-space:nowrap;left:131.00px;width:400px;text-align:right;">8:00</div>
<div style="position:absolute;top:75.40px;line-height:14px;font-size:8.3px;color:#999;white-space:nowrap;left:88.00px;width:400px;text-align:right;">HoW</div>
<div style="position:absolute;top:76.20px;line-height:14px;font-size:10px;color:#505050;white-space:nowrap;left:131.00px;width:400px;text-align:right;">7:38</div>
<div style="position:absolute;left:546.40px;top:65.00px;width:25.00px;height:22.00px;box-sizing:border-box;border:1px solid #add3f1;background:#e9f3fc;border-radius:3px;"></div>
<svg style="position:absolute;left:553.10px;top:70.00px;" width="12" height="12" viewBox="0 0 12 12"><g fill="none" stroke="#5e5e5e" stroke-width="0.85" stroke-linejoin="round"><path d="M4.300 3.400V2a0.800 0.800 0 0 1 0.800-0.800h3.300l2.400 2.400v4.200a0.800 0.800 0 0 1-0.800 0.800H7.700"/><path d="M1.200 4.400a0.800 0.800 0 0 1 0.800-0.800h3.200l2.500 2.500v4.100a0.800 0.800 0 0 1-0.800 0.800H2a0.800 0.800 0 0 1-0.800-0.800z"/><path d="M5.200 3.600v2.500h2.500" stroke-width="0.700"/></g></svg>
<div style="position:absolute;top:63.40px;line-height:14px;font-size:8.15px;color:#3434f8;white-space:nowrap;left:588.40px;">Cedar Springs</div>
<div style="position:absolute;top:63.40px;line-height:14px;font-size:8.15px;color:#3434f8;white-space:nowrap;left:657.60px;">Zone B</div>
<div style="position:absolute;top:63.40px;line-height:14px;font-size:8.15px;color:#3434f8;white-space:nowrap;left:727.00px;">Nursing</div>
<div style="position:absolute;top:74.80px;line-height:14px;font-size:8.15px;color:#3434f8;white-space:nowrap;left:727.00px;">Medicare Distinct</div>
<div style="position:absolute;top:63.40px;line-height:14px;font-size:8.15px;color:#3434f8;white-space:nowrap;left:796.00px;">Registered</div>
<div style="position:absolute;top:74.80px;line-height:14px;font-size:8.15px;color:#3434f8;white-space:nowrap;left:796.00px;">Nurse</div>
<div style="position:absolute;top:68.40px;line-height:14px;font-size:9.2px;color:#3434f8;white-space:nowrap;left:496.60px;width:400px;text-align:right;">5:59a</div>
<div style="position:absolute;top:68.40px;line-height:14px;font-size:9.2px;color:#3434f8;white-space:nowrap;left:534.60px;width:400px;text-align:right;">2:07p</div>
<div style="position:absolute;top:68.40px;line-height:14px;font-size:9.2px;color:#3434f8;white-space:nowrap;left:560.60px;width:400px;text-align:right;">7:38</div>
<div style="position:absolute;left:0.00px;top:93.00px;width:1081.00px;height:28.40px;background:#fff;"></div>
<div style="position:absolute;top:100.20px;line-height:14px;font-size:9.3px;color:#ccc;white-space:nowrap;letter-spacing:-0.208px;left:37.00px;">NOTES</div>
<div style="position:absolute;left:107.60px;top:97.20px;width:25.00px;height:22.00px;box-sizing:border-box;border:1px solid #add3f1;background:#eef6fd;border-radius:3px;"></div>
<div style="position:absolute;top:103.40px;line-height:14px;font-size:5px;color:#555;white-space:nowrap;font-weight:bold;left:115.50px;">66</div>
<div style="position:absolute;top:98.80px;line-height:14px;font-size:5px;color:#555;white-space:nowrap;font-weight:bold;left:120.70px;">99</div>
<div style="position:absolute;top:101.00px;line-height:14px;font-size:10.5px;color:#777;white-space:nowrap;left:160.40px;font-family:'Liberation Serif',serif;letter-spacing:0.700px;">&#8216;&#8216;<span style="font-family:'Liberation Sans',sans-serif;font-size:9.200px;letter-spacing:0;color:#444">Holiday Scheduled</span>&#8217;&#8217;</div>
<div style="position:absolute;left:4.00px;top:126.00px;width:25.00px;height:22.00px;box-sizing:border-box;border:1px solid #add3f1;background:#eef6fd;border-radius:3px;"></div>
<svg style="position:absolute;left:10.30px;top:130.80px;" width="12" height="12" viewBox="0 0 12 12"><g fill="none" stroke="#555" stroke-width="0.85" stroke-linejoin="round"><path d="M8.700 0.900l2.400 2.400L4.300 10.100l-3.500 1.100 1.100-3.500z"/><path d="M7.500 2.100l2.400 2.400M2.900 6.900l2.200 2.200" stroke-width="0.700"/><path d="M0.800 11.200l0.600-1.900 1.300 1.300z" fill="#555"/></g></svg>
<div style="position:absolute;left:37.00px;top:127.60px;width:26.00px;height:17.50px;background:#b5b5b5;"></div>
<div style="position:absolute;top:129.10px;line-height:14px;font-size:10px;color:#fff;white-space:nowrap;font-weight:bold;transform:scaleX(0.880);transform-origin:50% 50%;left:-150.00px;width:400px;text-align:center;">TUE</div>
<div style="position:absolute;left:65.20px;top:127.90px;width:7px;height:17px;writing-mode:vertical-rl;font-size:7.400px;line-height:7px;color:#bdbdbd;white-space:nowrap;letter-spacing:-0.200px">AUG</div>
<div style="position:absolute;top:129.10px;line-height:18px;font-size:15.6px;color:#77775a;white-space:nowrap;font-weight:bold;left:79.80px;">13</div>
<div style="position:absolute;left:107.60px;top:126.00px;width:25.00px;height:22.00px;box-sizing:border-box;border:1px solid #add3f1;background:#dcecfa;border-radius:3px;"></div>
<svg style="position:absolute;left:115.40px;top:131.30px;" width="10" height="12" viewBox="0 0 10 12"><g fill="none" stroke="#555" stroke-width="0.800"><rect x="0.600" y="1" width="8.400" height="10"/><path d="M0.600 2.200h8.400" stroke-width="2"/><path d="M4.300 5.800v3.400M5.500 5.800v3.400" stroke-width="0.600"/><path d="M3.400 6.600l0.900-0.800" stroke-width="0.600"/></g></svg>
<div style="position:absolute;top:129.50px;line-height:14px;font-size:10.3px;color:#333;white-space:nowrap;letter-spacing:-0.095px;left:-214.00px;width:400px;text-align:right;">2:00p</div>
<div style="position:absolute;top:129.50px;line-height:14px;font-size:10.3px;color:#333;white-space:nowrap;letter-spacing:-0.300px;left:-152.80px;width:400px;text-align:right;">10:05p</div>
<div style="position:absolute;left:326.00px;top:126.00px;width:25.00px;height:22.00px;box-sizing:border-box;border:1px solid #add3f1;background:#e6f1fc;border-radius:3px;"></div>
<svg style="position:absolute;left:332.50px;top:131.20px;" width="12" height="12" viewBox="0 0 12 12"><g fill="none" stroke="#6c6c6c" stroke-width="0.85"><circle cx="6" cy="6" r="5"/><path d="M3.600 4.100L6 6.100l2.600-2.200"/></g></svg>
<svg style="position:absolute;left:271.00px;top:131.50px;" width="13" height="10" viewBox="0 0 13 10"><g fill="#c6c6c6"><ellipse cx="4.600" cy="2.900" rx="2.500" ry="2.700"/><path d="M0.200 9.200c0-2.400 1.500-3.500 2.900-3.700 0.900 0.600 2.100 0.600 3 0 1.400 0.200 2.900 1.300 2.900 3.700 0 0.300-0.200 0.500-0.500 0.500H0.700c-0.300 0-0.500-0.200-0.500-0.500z"/><path d="M8.900 4.800h3.400M10.600 3.100v3.400" stroke="#c9c9c9" stroke-width="1" fill="none"/></g></svg>
<div style="position:absolute;top:128.20px;line-height:14px;font-size:10.7px;color:#333;white-space:nowrap;left:-84.60px;width:400px;text-align:right;">1:58p</div>
<svg style="position:absolute;left:362.00px;top:131.50px;" width="13" height="10" viewBox="0 0 13 10"><g fill="#c6c6c6"><ellipse cx="4.600" cy="2.900" rx="2.500" ry="2.700"/><path d="M0.200 9.200c0-2.400 1.500-3.500 2.900-3.700 0.900 0.600 2.100 0.600 3 0 1.400 0.200 2.900 1.300 2.900 3.700 0 0.300-0.200 0.500-0.500 0.500H0.700c-0.300 0-0.500-0.200-0.500-0.500z"/><path d="M8.900 4.800h3.400M10.600 3.100v3.400" stroke="#c9c9c9" stroke-width="1" fill="none"/></g></svg>
<div style="position:absolute;top:128.20px;line-height:14px;font-size:10.7px;color:#333;white-space:nowrap;left:10.00px;width:400px;text-align:right;">10:09p</div>
<div style="position:absolute;top:128.40px;line-height:14px;font-size:8.3px;color:#999;white-space:nowrap;left:87.40px;width:400px;text-align:right;">Rg1</div>
<div style="position:absolute;top:129.70px;line-height:14px;font-size:10px;color:#505050;white-space:nowrap;left:131.00px;width:400px;text-align:right;">7:41</div>
<div style="position:absolute;left:546.40px;top:126.00px;width:25.00px;height:22.00px;box-sizing:border-box;border:1px solid #add3f1;background:#e9f3fc;border-radius:3px;"></div>
<svg style="position:absolute;left:553.10px;top:131.00px;" width="12" height="12" viewBox="0 0 12 12"><g fill="none" stroke="#5e5e5e" stroke-width="0.85" stroke-linejoin="round"><path d="M4.300 3.400V2a0.800 0.800 0 0 1 0.800-0.800h3.300l2.400 2.400v4.200a0.800 0.800 0 0 1-0.800 0.800H7.700"/><path d="M1.200 4.400a0.800 0.800 0 0 1 0.800-0.800h3.200l2.500 2.500v4.100a0.800 0.800 0 0 1-0.800 0.800H2a0.800 0.800 0 0 1-0.800-0.800z"/><path d="M5.200 3.600v2.500h2.500" stroke-width="0.700"/></g></svg>
<div style="position:absolute;top:124.10px;line-height:14px;font-size:8.15px;color:#3434f8;white-space:nowrap;left:588.40px;">Cedar Springs</div>
<div style="position:absolute;top:124.10px;line-height:14px;font-size:8.15px;color:#3434f8;white-space:nowrap;left:657.60px;">Zone C</div>
<div style="position:absolute;top:124.10px;line-height:14px;font-size:8.15px;color:#3434f8;white-space:nowrap;left:727.00px;">Nursing</div>
<div style="position:absolute;top:135.50px;line-height:14px;font-size:8.15px;color:#3434f8;white-space:nowrap;left:727.00px;">Medicare Distinct</div>
<div style="position:absolute;top:124.10px;line-height:14px;font-size:8.15px;color:#3434f8;white-space:nowrap;left:796.00px;">Registered</div>
<div style="position:absolute;top:135.50px;line-height:14px;font-size:8.15px;color:#3434f8;white-space:nowrap;left:796.00px;">Nurse</div>
<div style="position:absolute;top:129.10px;line-height:14px;font-size:9.2px;color:#3434f8;white-space:nowrap;left:496.60px;width:400px;text-align:right;">1:58p</div>
<div style="position:absolute;top:129.10px;line-height:14px;font-size:9.2px;color:#3434f8;white-space:nowrap;left:534.60px;width:400px;text-align:right;">10:09p</div>
<div style="position:absolute;top:129.10px;line-height:14px;font-size:9.2px;color:#3434f8;white-space:nowrap;left:560.60px;width:400px;text-align:right;">7:41</div>
<div style="position:absolute;left:4.00px;top:154.00px;width:25.00px;height:22.00px;box-sizing:border-box;border:1px solid #add3f1;background:#eef6fd;border-radius:3px;"></div>
<svg style="position:absolute;left:10.30px;top:158.80px;" width="12" height="12" viewBox="0 0 12 12"><g fill="none" stroke="#555" stroke-width="0.85" stroke-linejoin="round"><path d="M8.700 0.900l2.400 2.400L4.300 10.100l-3.500 1.100 1.100-3.500z"/><path d="M7.500 2.100l2.400 2.400M2.900 6.900l2.200 2.200" stroke-width="0.700"/><path d="M0.800 11.200l0.600-1.900 1.300 1.300z" fill="#555"/></g></svg>
<div style="position:absolute;left:37.00px;top:156.20px;width:26.00px;height:17.50px;background:#b5b5b5;"></div>
<div style="position:absolute;top:157.70px;line-height:14px;font-size:10px;color:#fff;white-space:nowrap;font-weight:bold;transform:scaleX(0.882);transform-origin:50% 50%;left:-150.00px;width:400px;text-align:center;">WED</div>
<div style="position:absolute;left:65.20px;top:156.50px;width:7px;height:17px;writing-mode:vertical-rl;font-size:7.400px;line-height:7px;color:#bdbdbd;white-space:nowrap;letter-spacing:-0.200px">AUG</div>
<div style="position:absolute;top:157.70px;line-height:18px;font-size:15.6px;color:#77775a;white-space:nowrap;font-weight:bold;left:79.80px;">14</div>
<div style="position:absolute;left:107.60px;top:154.00px;width:25.00px;height:22.00px;box-sizing:border-box;border:1px solid #add3f1;background:#dcecfa;border-radius:3px;"></div>
<svg style="position:absolute;left:115.40px;top:159.30px;" width="10" height="12" viewBox="0 0 10 12"><g fill="none" stroke="#555" stroke-width="0.800"><rect x="0.600" y="1" width="8.400" height="10"/><path d="M0.600 2.200h8.400" stroke-width="2"/><path d="M4.300 5.800v3.400M5.500 5.800v3.400" stroke-width="0.600"/><path d="M3.400 6.600l0.900-0.800" stroke-width="0.600"/></g></svg>
<div style="position:absolute;top:158.10px;line-height:14px;font-size:10.3px;color:#333;white-space:nowrap;letter-spacing:-0.095px;left:-214.00px;width:400px;text-align:right;">6:00a</div>
<div style="position:absolute;top:158.10px;line-height:14px;font-size:10.3px;color:#333;white-space:nowrap;letter-spacing:-0.095px;left:-152.80px;width:400px;text-align:right;">2:05p</div>
<div style="position:absolute;left:326.00px;top:154.00px;width:25.00px;height:22.00px;box-sizing:border-box;border:1px solid #add3f1;background:#e6f1fc;border-radius:3px;"></div>
<svg style="position:absolute;left:332.50px;top:159.20px;" width="12" height="12" viewBox="0 0 12 12"><g fill="none" stroke="#6c6c6c" stroke-width="0.85"><circle cx="6" cy="6" r="5"/><path d="M3.600 4.100L6 6.100l2.600-2.200"/></g></svg>
<svg style="position:absolute;left:271.00px;top:160.10px;" width="13" height="10" viewBox="0 0 13 10"><g fill="#c6c6c6"><ellipse cx="4.600" cy="2.900" rx="2.500" ry="2.700"/><path d="M0.200 9.200c0-2.400 1.500-3.500 2.900-3.700 0.900 0.600 2.100 0.600 3 0 1.400 0.200 2.900 1.300 2.900 3.700 0 0.300-0.200 0.500-0.500 0.500H0.700c-0.300 0-0.500-0.200-0.500-0.500z"/><path d="M8.900 4.800h3.400M10.600 3.100v3.400" stroke="#c9c9c9" stroke-width="1" fill="none"/></g></svg>
<div style="position:absolute;top:156.80px;line-height:14px;font-size:10.7px;color:#333;white-space:nowrap;left:-84.60px;width:400px;text-align:right;">5:57a</div>
<svg style="position:absolute;left:365.60px;top:160.10px;" width="13" height="10" viewBox="0 0 13 10"><g fill="#c6c6c6"><ellipse cx="4.600" cy="2.900" rx="2.500" ry="2.700"/><path d="M0.200 9.200c0-2.400 1.500-3.500 2.900-3.700 0.900 0.600 2.100 0.600 3 0 1.400 0.200 2.900 1.300 2.900 3.700 0 0.300-0.200 0.500-0.500 0.500H0.700c-0.300 0-0.500-0.200-0.500-0.500z"/><path d="M8.900 4.800h3.400M10.600 3.100v3.400" stroke="#c9c9c9" stroke-width="1" fill="none"/></g></svg>
<div style="position:absolute;top:156.80px;line-height:14px;font-size:10.7px;color:#333;white-space:nowrap;left:10.00px;width:400px;text-align:right;">2:06p</div>
<div style="position:absolute;top:157.00px;line-height:14px;font-size:8.3px;color:#999;white-space:nowrap;left:87.40px;width:400px;text-align:right;">Rg1</div>
<div style="position:absolute;top:158.30px;line-height:14px;font-size:10px;color:#505050;white-space:nowrap;left:131.00px;width:400px;text-align:right;">7:39</div>
<div style="position:absolute;left:546.40px;top:154.00px;width:25.00px;height:22.00px;box-sizing:border-box;border:1px solid #add3f1;background:#e9f3fc;border-radius:3px;"></div>
<svg style="position:absolute;left:553.10px;top:159.00px;" width="12" height="12" viewBox="0 0 12 12"><g fill="none" stroke="#5e5e5e" stroke-width="0.85" stroke-linejoin="round"><path d="M4.300 3.400V2a0.800 0.800 0 0 1 0.800-0.800h3.300l2.400 2.400v4.200a0.800 0.800 0 0 1-0.800 0.800H7.700"/><path d="M1.200 4.400a0.800 0.800 0 0 1 0.800-0.800h3.200l2.500 2.500v4.100a0.800 0.800 0 0 1-0.800 0.800H2a0.800 0.800 0 0 1-0.800-0.800z"/><path d="M5.200 3.600v2.500h2.500" stroke-width="0.700"/></g></svg>
<div style="position:absolute;top:152.70px;line-height:14px;font-size:8.15px;color:#3434f8;white-space:nowrap;left:588.40px;">Cedar Springs</div>
<div style="position:absolute;top:152.70px;line-height:14px;font-size:8.15px;color:#3434f8;white-space:nowrap;left:657.60px;">Zone B</div>
<div style="position:absolute;top:152.70px;line-height:14px;font-size:8.15px;color:#3434f8;white-space:nowrap;left:727.00px;">Nursing</div>
<div style="position:absolute;top:164.10px;line-height:14px;font-size:8.15px;color:#3434f8;white-space:nowrap;left:727.00px;">Medicare Distinct</div>
<div style="position:absolute;top:152.70px;line-height:14px;font-size:8.15px;color:#3434f8;white-space:nowrap;left:796.00px;">Registered</div>
<div style="position:absolute;top:164.10px;line-height:14px;font-size:8.15px;color:#3434f8;white-space:nowrap;left:796.00px;">Nurse</div>
<div style="position:absolute;top:157.70px;line-height:14px;font-size:9.2px;color:#3434f8;white-space:nowrap;left:496.60px;width:400px;text-align:right;">5:57a</div>
<div style="position:absolute;top:157.70px;line-height:14px;font-size:9.2px;color:#3434f8;white-space:nowrap;left:534.60px;width:400px;text-align:right;">2:06p</div>
<div style="position:absolute;top:157.70px;line-height:14px;font-size:9.2px;color:#3434f8;white-space:nowrap;left:560.60px;width:400px;text-align:right;">7:39</div>
<div style="position:absolute;left:4.00px;top:183.00px;width:25.00px;height:22.00px;box-sizing:border-box;border:1px solid #add3f1;background:#eef6fd;border-radius:3px;"></div>
<svg style="position:absolute;left:10.30px;top:187.80px;" width="12" height="12" viewBox="0 0 12 12"><g fill="none" stroke="#555" stroke-width="0.85" stroke-linejoin="round"><path d="M8.700 0.900l2.400 2.400L4.300 10.100l-3.500 1.100 1.100-3.500z"/><path d="M7.500 2.100l2.400 2.400M2.900 6.900l2.200 2.200" stroke-width="0.700"/><path d="M0.800 11.200l0.600-1.900 1.300 1.300z" fill="#555"/></g></svg>
<div style="position:absolute;left:37.00px;top:184.80px;width:26.00px;height:17.50px;background:#b5b5b5;"></div>
<div style="position:absolute;top:186.30px;line-height:14px;font-size:10px;color:#fff;white-space:nowrap;font-weight:bold;transform:scaleX(0.895);transform-origin:50% 50%;left:-150.00px;width:400px;text-align:center;">THU</div>
<div style="position:absolute;left:65.20px;top:185.10px;width:7px;height:17px;writing-mode:vertical-rl;font-size:7.400px;line-height:7px;color:#bdbdbd;white-space:nowrap;letter-spacing:-0.200px">AUG</div>
<div style="position:absolute;top:186.30px;line-height:18px;font-size:15.6px;color:#77775a;white-space:nowrap;font-weight:bold;left:79.80px;">15</div>
<div style="position:absolute;left:107.60px;top:183.00px;width:25.00px;height:22.00px;box-sizing:border-box;border:1px solid #add3f1;background:#dcecfa;border-radius:3px;"></div>
<svg style="position:absolute;left:115.40px;top:188.30px;" width="10" height="12" viewBox="0 0 10 12"><g fill="none" stroke="#555" stroke-width="0.800"><rect x="0.600" y="1" width="8.400" height="10"/><path d="M0.600 2.200h8.400" stroke-width="2"/><path d="M4.300 5.800v3.400M5.500 5.800v3.400" stroke-width="0.600"/><path d="M3.400 6.600l0.900-0.800" stroke-width="0.600"/></g></svg>
<div style="position:absolute;top:186.70px;line-height:14px;font-size:10.3px;color:#333;white-space:nowrap;letter-spacing:-0.095px;left:-214.00px;width:400px;text-align:right;">6:00a</div>
<div style="position:absolute;top:186.70px;line-height:14px;font-size:10.3px;color:#333;white-space:nowrap;letter-spacing:-0.095px;left:-152.80px;width:400px;text-align:right;">2:05p</div>
<div style="position:absolute;left:326.00px;top:183.00px;width:25.00px;height:22.00px;box-sizing:border-box;border:1px solid #add3f1;background:#e6f1fc;border-radius:3px;"></div>
<svg style="position:absolute;left:332.50px;top:188.20px;" width="12" height="12" viewBox="0 0 12 12"><g fill="none" stroke="#6c6c6c" stroke-width="0.85"><circle cx="6" cy="6" r="5"/><path d="M3.600 4.100L6 6.100l2.600-2.200"/></g></svg>
<svg style="position:absolute;left:271.00px;top:188.70px;" width="13" height="10" viewBox="0 0 13 10"><g fill="#c6c6c6"><ellipse cx="4.600" cy="2.900" rx="2.500" ry="2.700"/><path d="M0.200 9.200c0-2.400 1.500-3.500 2.900-3.700 0.900 0.600 2.100 0.600 3 0 1.400 0.200 2.900 1.300 2.900 3.700 0 0.300-0.200 0.500-0.500 0.500H0.700c-0.300 0-0.500-0.200-0.500-0.500z"/><path d="M8.900 4.800h3.400M10.600 3.100v3.400" stroke="#c9c9c9" stroke-width="1" fill="none"/></g></svg>
<div style="position:absolute;top:185.40px;line-height:14px;font-size:10.7px;color:#333;white-space:nowrap;left:-84.60px;width:400px;text-align:right;">5:59a</div>
<svg style="position:absolute;left:365.60px;top:188.70px;" width="13" height="10" viewBox="0 0 13 10"><g fill="#c6c6c6"><ellipse cx="4.600" cy="2.900" rx="2.500" ry="2.700"/><path d="M0.200 9.200c0-2.400 1.500-3.500 2.900-3.700 0.900 0.600 2.100 0.600 3 0 1.400 0.200 2.900 1.300 2.900 3.700 0 0.300-0.200 0.500-0.500 0.500H0.700c-0.300 0-0.500-0.200-0.500-0.500z"/><path d="M8.900 4.800h3.400M10.600 3.100v3.400" stroke="#c9c9c9" stroke-width="1" fill="none"/></g></svg>
<div style="position:absolute;top:185.40px;line-height:14px;font-size:10.7px;color:#333;white-space:nowrap;left:10.00px;width:400px;text-align:right;">2:06p</div>
<div style="position:absolute;top:185.60px;line-height:14px;font-size:8.3px;color:#999;white-space:nowrap;left:87.40px;width:400px;text-align:right;">Rg1</div>
<div style="position:absolute;top:186.90px;line-height:14px;font-size:10px;color:#505050;white-space:nowrap;left:131.00px;width:400px;text-align:right;">7:37</div>
<div style="position:absolute;left:546.40px;top:183.00px;width:25.00px;height:22.00px;box-sizing:border-box;border:1px solid #add3f1;background:#e9f3fc;border-radius:3px;"></div>
<svg style="position:absolute;left:553.10px;top:188.00px;" width="12" height="12" viewBox="0 0 12 12"><g fill="none" stroke="#5e5e5e" stroke-width="0.85" stroke-linejoin="round"><path d="M4.300 3.400V2a0.800 0.800 0 0 1 0.800-0.800h3.300l2.400 2.400v4.200a0.800 0.800 0 0 1-0.800 0.800H7.700"/><path d="M1.200 4.400a0.800 0.800 0 0 1 0.800-0.800h3.200l2.500 2.500v4.100a0.800 0.800 0 0 1-0.800 0.800H2a0.800 0.800 0 0 1-0.800-0.800z"/><path d="M5.200 3.600v2.500h2.500" stroke-width="0.700"/></g></svg>
<div style="position:absolute;top:181.30px;line-height:14px;font-size:8.15px;color:#3434f8;white-space:nowrap;left:588.40px;">Cedar Springs</div>
<div style="position:absolute;top:181.30px;line-height:14px;font-size:8.15px;color:#3434f8;white-space:nowrap;left:657.60px;">Zone B</div>
<div style="position:absolute;top:181.30px;line-height:14px;font-size:8.15px;color:#3434f8;white-space:nowrap;left:727.00px;">Nursing</div>
<div style="position:absolute;top:192.70px;line-height:14px;font-size:8.15px;color:#3434f8;white-space:nowrap;left:727.00px;">Medicare Distinct</div>
<div style="position:absolute;top:181.30px;line-height:14px;font-size:8.15px;color:#3434f8;white-space:nowrap;left:796.00px;">Registered</div>
<div style="position:absolute;top:192.70px;line-height:14px;font-size:8.15px;color:#3434f8;white-space:nowrap;left:796.00px;">Nurse</div>
<div style="position:absolute;top:186.30px;line-height:14px;font-size:9.2px;color:#3434f8;white-space:nowrap;left:496.60px;width:400px;text-align:right;">5:59a</div>
<div style="position:absolute;top:186.30px;line-height:14px;font-size:9.2px;color:#3434f8;white-space:nowrap;left:534.60px;width:400px;text-align:right;">2:06p</div>
<div style="position:absolute;top:186.30px;line-height:14px;font-size:9.2px;color:#3434f8;white-space:nowrap;left:560.60px;width:400px;text-align:right;">7:37</div>
<div style="position:absolute;left:4.00px;top:211.00px;width:25.00px;height:22.00px;box-sizing:border-box;border:1px solid #add3f1;background:#eef6fd;border-radius:3px;"></div>
<svg style="position:absolute;left:10.30px;top:215.80px;" width="12" height="12" viewBox="0 0 12 12"><g fill="none" stroke="#555" stroke-width="0.85" stroke-linejoin="round"><path d="M8.700 0.900l2.400 2.400L4.300 10.100l-3.500 1.100 1.100-3.500z"/><path d="M7.500 2.100l2.400 2.400M2.900 6.900l2.200 2.200" stroke-width="0.700"/><path d="M0.800 11.200l0.600-1.900 1.300 1.300z" fill="#555"/></g></svg>
<div style="position:absolute;left:37.00px;top:213.40px;width:26.00px;height:17.50px;background:#b5b5b5;"></div>
<div style="position:absolute;top:214.90px;line-height:14px;font-size:10px;color:#fff;white-space:nowrap;font-weight:bold;transform:scaleX(0.944);transform-origin:50% 50%;left:-150.00px;width:400px;text-align:center;">FRI</div>
<div style="position:absolute;left:65.20px;top:213.70px;width:7px;height:17px;writing-mode:vertical-rl;font-size:7.400px;line-height:7px;color:#bdbdbd;white-space:nowrap;letter-spacing:-0.200px">AUG</div>
<div style="position:absolute;top:214.90px;line-height:18px;font-size:15.6px;color:#77775a;white-space:nowrap;font-weight:bold;left:79.80px;">16</div>
<div style="position:absolute;left:107.60px;top:211.00px;width:25.00px;height:22.00px;box-sizing:border-box;border:1px solid #add3f1;background:#dcecfa;border-radius:3px;"></div>
<svg style="position:absolute;left:115.40px;top:216.30px;" width="10" height="12" viewBox="0 0 10 12"><g fill="none" stroke="#555" stroke-width="0.800"><rect x="0.600" y="1" width="8.400" height="10"/><path d="M0.600 2.200h8.400" stroke-width="2"/><path d="M4.300 5.800v3.400M5.500 5.800v3.400" stroke-width="0.600"/><path d="M3.400 6.600l0.900-0.800" stroke-width="0.600"/></g></svg>
<div style="position:absolute;top:215.30px;line-height:14px;font-size:10.3px;color:#333;white-space:nowrap;letter-spacing:-0.095px;left:-214.00px;width:400px;text-align:right;">2:00p</div>
<div style="position:absolute;top:215.30px;line-height:14px;font-size:10.3px;color:#333;white-space:nowrap;letter-spacing:-0.300px;left:-152.80px;width:400px;text-align:right;">10:05p</div>
<div style="position:absolute;left:326.00px;top:211.00px;width:25.00px;height:22.00px;box-sizing:border-box;border:1px solid #add3f1;background:#e6f1fc;border-radius:3px;"></div>
<svg style="position:absolute;left:332.50px;top:216.20px;" width="12" height="12" viewBox="0 0 12 12"><g fill="none" stroke="#6c6c6c" stroke-width="0.85"><circle cx="6" cy="6" r="5"/><path d="M3.600 4.100L6 6.100l2.600-2.200"/></g></svg>
<div style="position:absolute;left:267.60px;top:213.30px;width:49.40px;height:18.20px;background:#f7f7f7;"></div>
<div style="position:absolute;left:362.00px;top:213.30px;width:49.60px;height:18.20px;background:#f7f7f7;"></div>
<div style="position:absolute;left:4.00px;top:240.00px;width:25.00px;height:22.00px;box-sizing:border-box;border:1px solid #add3f1;background:#eef6fd;border-radius:3px;"></div>
<svg style="position:absolute;left:10.30px;top:244.80px;" width="12" height="12" viewBox="0 0 12 12"><g fill="none" stroke="#555" stroke-width="0.85" stroke-linejoin="round"><path d="M8.700 0.900l2.400 2.400L4.300 10.100l-3.500 1.100 1.100-3.500z"/><path d="M7.500 2.100l2.400 2.400M2.900 6.900l2.200 2.200" stroke-width="0.700"/><path d="M0.800 11.200l0.600-1.900 1.300 1.300z" fill="#555"/></g></svg>
<div style="position:absolute;left:37.00px;top:242.00px;width:26.00px;height:17.50px;background:#b5b5b5;"></div>
<div style="position:absolute;top:243.50px;line-height:14px;font-size:10px;color:#fff;white-space:nowrap;font-weight:bold;transform:scaleX(0.882);transform-origin:50% 50%;left:-150.00px;width:400px;text-align:center;">SAT</div>
<div style="position:absolute;left:65.20px;top:242.30px;width:7px;height:17px;writing-mode:vertical-rl;font-size:7.400px;line-height:7px;color:#bdbdbd;white-space:nowrap;letter-spacing:-0.200px">AUG</div>
<div style="position:absolute;top:243.50px;line-height:18px;font-size:15.6px;color:#77775a;white-space:nowrap;font-weight:bold;left:79.80px;">17</div>
<div style="position:absolute;left:107.60px;top:240.00px;width:25.00px;height:22.00px;box-sizing:border-box;border:1px solid #add3f1;background:#dcecfa;border-radius:3px;"></div>
<svg style="position:absolute;left:115.40px;top:245.30px;" width="10" height="12" viewBox="0 0 10 12"><g fill="none" stroke="#555" stroke-width="0.800"><rect x="0.600" y="1" width="8.400" height="10"/><path d="M0.600 2.200h8.400" stroke-width="2"/><path d="M4.300 5.800v3.400M5.500 5.800v3.400" stroke-width="0.600"/><path d="M3.400 6.600l0.900-0.800" stroke-width="0.600"/></g></svg>
<div style="position:absolute;top:243.90px;line-height:14px;font-size:10.3px;color:#333;white-space:nowrap;letter-spacing:-0.095px;left:-214.00px;width:400px;text-align:right;">2:00p</div>
<div style="position:absolute;top:243.90px;line-height:14px;font-size:10.3px;color:#333;white-space:nowrap;letter-spacing:-0.300px;left:-152.80px;width:400px;text-align:right;">10:05p</div>
<div style="position:absolute;left:326.00px;top:240.00px;width:25.00px;height:22.00px;box-sizing:border-box;border:1px solid #add3f1;background:#e6f1fc;border-radius:3px;"></div>
<svg style="position:absolute;left:332.50px;top:245.20px;" width="12" height="12" viewBox="0 0 12 12"><g fill="none" stroke="#6c6c6c" stroke-width="0.85"><circle cx="6" cy="6" r="5"/><path d="M3.600 4.100L6 6.100l2.600-2.200"/></g></svg>
<div style="position:absolute;left:267.60px;top:241.90px;width:49.40px;height:18.20px;background:#f7f7f7;"></div>
<div style="position:absolute;left:362.00px;top:241.90px;width:49.60px;height:18.20px;background:#f7f7f7;"></div>
<div style="position:absolute;left:4.00px;top:269.00px;width:25.00px;height:22.00px;box-sizing:border-box;border:1px solid #add3f1;background:#eef6fd;border-radius:3px;"></div>
<svg style="position:absolute;left:10.30px;top:273.80px;" width="12" height="12" viewBox="0 0 12 12"><g fill="none" stroke="#555" stroke-width="0.85" stroke-linejoin="round"><path d="M8.700 0.900l2.400 2.400L4.300 10.100l-3.500 1.100 1.100-3.500z"/><path d="M7.500 2.100l2.400 2.400M2.900 6.900l2.200 2.200" stroke-width="0.700"/><path d="M0.800 11.200l0.600-1.900 1.300 1.300z" fill="#555"/></g></svg>
<div style="position:absolute;left:37.00px;top:270.60px;width:26.00px;height:17.50px;background:#b5b5b5;"></div>
<div style="position:absolute;top:272.10px;line-height:14px;font-size:10px;color:#fff;white-space:nowrap;font-weight:bold;transform:scaleX(0.885);transform-origin:50% 50%;left:-150.00px;width:400px;text-align:center;">SUN</div>
<div style="position:absolute;left:65.20px;top:270.90px;width:7px;height:17px;writing-mode:vertical-rl;font-size:7.400px;line-height:7px;color:#bdbdbd;white-space:nowrap;letter-spacing:-0.200px">AUG</div>
<div style="position:absolute;top:272.10px;line-height:18px;font-size:15.6px;color:#77775a;white-space:nowrap;font-weight:bold;left:79.80px;">18</div>
<div style="position:absolute;left:107.60px;top:269.00px;width:25.00px;height:22.00px;box-sizing:border-box;border:1px solid #add3f1;background:#dcecfa;border-radius:3px;"></div>
<svg style="position:absolute;left:115.40px;top:274.30px;" width="10" height="12" viewBox="0 0 10 12"><g fill="none" stroke="#555" stroke-width="0.800"><rect x="0.600" y="1" width="8.400" height="10"/><path d="M0.600 2.200h8.400" stroke-width="2"/><path d="M4.300 5.800v3.400M5.500 5.800v3.400" stroke-width="0.600"/><path d="M3.400 6.600l0.900-0.800" stroke-width="0.600"/></g></svg>
<div style="position:absolute;top:272.50px;line-height:14px;font-size:10.3px;color:#333;white-space:nowrap;letter-spacing:-0.095px;left:-214.00px;width:400px;text-align:right;">6:00a</div>
<div style="position:absolute;top:272.50px;line-height:14px;font-size:10.3px;color:#333;white-space:nowrap;letter-spacing:-0.095px;left:-152.80px;width:400px;text-align:right;">2:05p</div>
<div style="position:absolute;left:326.00px;top:269.00px;width:25.00px;height:22.00px;box-sizing:border-box;border:1px solid #add3f1;background:#e6f1fc;border-radius:3px;"></div>
<svg style="position:absolute;left:332.50px;top:274.20px;" width="12" height="12" viewBox="0 0 12 12"><g fill="none" stroke="#6c6c6c" stroke-width="0.85"><circle cx="6" cy="6" r="5"/><path d="M3.600 4.100L6 6.100l2.600-2.200"/></g></svg>
<div style="position:absolute;left:267.60px;top:270.50px;width:49.40px;height:18.20px;background:#f7f7f7;"></div>
<div style="position:absolute;left:362.00px;top:270.50px;width:49.60px;height:18.20px;background:#f7f7f7;"></div>
<div style="position:absolute;left:4.00px;top:296.40px;width:25.00px;height:22.00px;box-sizing:border-box;border:1px solid #add3f1;background:#eef6fd;border-radius:3px;"></div>
<svg style="position:absolute;left:10.30px;top:301.20px;" width="12" height="12" viewBox="0 0 12 12"><g fill="none" stroke="#555" stroke-width="0.85" stroke-linejoin="round"><path d="M8.700 0.900l2.400 2.400L4.300 10.100l-3.500 1.100 1.100-3.500z"/><path d="M7.500 2.100l2.400 2.400M2.900 6.900l2.200 2.200" stroke-width="0.700"/><path d="M0.800 11.200l0.600-1.900 1.300 1.300z" fill="#555"/></g></svg>
<div style="position:absolute;left:107.60px;top:296.40px;width:25.00px;height:22.00px;box-sizing:border-box;border:1px solid #add3f1;background:#dcecfa;border-radius:3px;"></div>
<svg style="position:absolute;left:115.40px;top:301.70px;" width="10" height="12" viewBox="0 0 10 12"><g fill="none" stroke="#555" stroke-width="0.800"><rect x="0.600" y="1" width="8.400" height="10"/><path d="M0.600 2.200h8.400" stroke-width="2"/><path d="M4.300 5.800v3.400M5.500 5.800v3.400" stroke-width="0.600"/><path d="M3.400 6.600l0.900-0.800" stroke-width="0.600"/></g></svg>
<div style="position:absolute;left:326.00px;top:296.40px;width:25.00px;height:22.00px;box-sizing:border-box;border:1px solid #add3f1;background:#e6f1fc;border-radius:3px;"></div>
<svg style="position:absolute;left:332.50px;top:301.60px;" width="12" height="12" viewBox="0 0 12 12"><g fill="none" stroke="#6c6c6c" stroke-width="0.85"><circle cx="6" cy="6" r="5"/><path d="M3.600 4.100L6 6.100l2.600-2.200"/></g></svg>
<div style="position:absolute;left:0.00px;top:28.00px;width:1081.00px;height:1.00px;background:#ddd;"></div>
<div style="position:absolute;left:0.00px;top:57.00px;width:1081.00px;height:1.00px;background:#dbe9f7;"></div>
<div style="position:absolute;left:0.00px;top:93.00px;width:1081.00px;height:1.00px;background:#dbe9f7;"></div>
<div style="position:absolute;left:0.00px;top:121.40px;width:1081.00px;height:1.00px;background:#ddd;"></div>
<div style="position:absolute;left:0.00px;top:150.00px;width:1081.00px;height:1.00px;background:#ddd;"></div>
<div style="position:absolute;left:0.00px;top:178.60px;width:1081.00px;height:1.00px;background:#ddd;"></div>
<div style="position:absolute;left:0.00px;top:207.20px;width:1081.00px;height:1.00px;background:#ddd;"></div>
<div style="position:absolute;left:0.00px;top:235.80px;width:1081.00px;height:1.00px;background:#ddd;"></div>
<div style="position:absolute;left:0.00px;top:264.40px;width:1081.00px;height:1.00px;background:#ddd;"></div>
<div style="position:absolute;left:0.00px;top:293.00px;width:1081.00px;height:1.00px;background:#ddd;"></div>
</div>
<div style="position:absolute;left:163.00px;top:287.00px;width:1.00px;height:36.60px;background:#4a90d9;"></div>
<div style="position:absolute;left:1245.00px;top:230.00px;width:13.00px;height:298.60px;background:#f1f1f1;"></div>
<div style="position:absolute;left:1246.40px;top:243.00px;width:9.60px;height:184.60px;background:#c1c1c1;"></div>
<svg style="position:absolute;left:1247.80px;top:235.00px;" width="7" height="5" viewBox="0 0 7 5"><path d="M0.400 4.200L3.500 0.600l3.100 3.600z" fill="#a3a3a3"/></svg>
<svg style="position:absolute;left:1247.80px;top:518.40px;" width="7" height="5" viewBox="0 0 7 5"><path d="M0.400 0.800L3.500 4.400l3.100-3.600z" fill="#505050"/></svg>
<div style="position:absolute;left:164.00px;top:527.60px;width:1081.00px;height:12.40px;background:#f1f1f1;"></div>
<div style="position:absolute;left:1245.00px;top:527.60px;width:13.00px;height:12.40px;background:#dcdcdc;"></div>
<div style="position:absolute;left:176.70px;top:529.00px;width:880.60px;height:10.00px;background:#c1c1c1;"></div>
<svg style="position:absolute;left:166.50px;top:530.50px;" width="5" height="7" viewBox="0 0 5 7"><path d="M4.200 0.400L0.600 3.500l3.600 3.100z" fill="#a3a3a3"/></svg>
<svg style="position:absolute;left:1236.40px;top:530.50px;" width="5" height="7" viewBox="0 0 5 7"><path d="M0.800 0.400L4.400 3.500l-3.600 3.100z" fill="#505050"/></svg>
<div style="position:absolute;left:164.00px;top:539.40px;width:1094.00px;height:28.60px;background:#f4f4f4;"></div>
<div style="position:absolute;top:548.10px;line-height:14px;font-size:9.6px;color:#2180d1;white-space:nowrap;font-weight:bold;text-rendering:geometricPrecision;transform:scaleX(0.963);transform-origin:0 50%;left:171.00px;">Details</div>
<svg style="position:absolute;left:1237.00px;top:547.00px;" width="14" height="14" viewBox="0 0 14 14"><g fill="none" stroke="#6aa5db" stroke-width="1"><circle cx="7" cy="7" r="5.800"/><path d="M3.8 5.9L7 9l3.2-3.1"/></g></svg>
<div style="position:absolute;left:164.00px;top:568.00px;width:1094.00px;height:1.00px;background:#ddd;"></div>
<div style="position:absolute;left:164.00px;top:569.00px;width:1094.00px;height:28.00px;background:#f5f5f5;"></div>
<div style="position:absolute;left:164.00px;top:597.00px;width:1094.00px;height:1.00px;background:#ddd;"></div>
<div style="position:absolute;left:172.40px;top:573.60px;width:88.60px;height:18.40px;background:#3a8fd6;border-radius:2px;"></div>
<div style="position:absolute;top:576.50px;line-height:14px;font-size:10px;color:#fff;white-space:nowrap;left:16.70px;width:400px;text-align:center;">Period Summary</div>
<div style="position:absolute;top:576.50px;line-height:14px;font-size:10px;color:#333;white-space:nowrap;left:276.30px;">Daily Summary</div>
<div style="position:absolute;top:576.50px;line-height:14px;font-size:10px;color:#333;white-space:nowrap;left:366.30px;">Monthly Projections</div>
<div style="position:absolute;top:576.50px;line-height:14px;font-size:10px;color:#333;white-space:nowrap;left:476.00px;">Time Off Balances</div>
<div style="position:absolute;top:576.50px;line-height:14px;font-size:10px;color:#333;white-space:nowrap;left:579.70px;">Notifications</div>
<div style="position:absolute;top:576.50px;line-height:14px;font-size:10px;color:#333;white-space:nowrap;left:656.30px;">Points</div>
<div style="position:absolute;top:576.50px;line-height:14px;font-size:10px;color:#333;white-space:nowrap;left:706.30px;">Lunch Waiver/s</div>
<div style="position:absolute;top:576.50px;line-height:14px;font-size:10px;color:#333;white-space:nowrap;left:797.30px;">Alerts</div>
<div style="position:absolute;left:250.20px;top:598.00px;width:1.00px;height:22.00px;background:#ddd;"></div>
<div style="position:absolute;left:502.20px;top:598.00px;width:1.00px;height:22.00px;background:#ddd;"></div>
<div style="position:absolute;left:563.20px;top:598.00px;width:1.00px;height:22.00px;background:#ddd;"></div>
<div style="position:absolute;left:632.80px;top:598.00px;width:1.00px;height:22.00px;background:#ddd;"></div>
<div style="position:absolute;left:720.40px;top:598.00px;width:1.00px;height:22.00px;background:#ddd;"></div>
<div style="position:absolute;left:164.00px;top:620.00px;width:557.00px;height:1.00px;background:#ddd;"></div>
<div style="position:absolute;top:602.50px;line-height:14px;font-size:10px;color:#777;white-space:nowrap;left:172.00px;">Pay Desig.</div>
<div style="position:absolute;top:602.50px;line-height:14px;font-size:10px;color:#777;white-space:nowrap;left:176.60px;width:400px;text-align:center;">Location, Zone, Department, Position</div>
<div style="position:absolute;top:602.50px;line-height:14px;font-size:10px;color:#777;white-space:nowrap;left:332.80px;width:400px;text-align:center;">Hours</div>
<div style="position:absolute;top:602.50px;line-height:14px;font-size:10px;color:#777;white-space:nowrap;left:405.00px;width:400px;text-align:center;">Rate</div>
<div style="position:absolute;top:602.50px;line-height:14px;font-size:10px;color:#777;white-space:nowrap;left:487.20px;width:400px;text-align:center;">Dollars</div>
<div style="position:absolute;left:164.00px;top:640.70px;width:557.00px;height:1.00px;background:#ddd;"></div>
<div style="position:absolute;top:624.95px;line-height:14px;font-size:10px;color:#333;white-space:nowrap;left:172.00px;">Regular 1</div>
<div style="position:absolute;top:624.95px;line-height:14px;font-size:10px;color:#333;white-space:nowrap;left:258.70px;">Cedar Springs, Zone B, Nursing Medicare Distinct,...</div>
<div style="position:absolute;top:624.95px;line-height:14px;font-size:10px;color:#333;white-space:nowrap;left:156.70px;width:400px;text-align:right;">15:16</div>
<div style="position:absolute;top:624.95px;line-height:14px;font-size:10px;color:#333;white-space:nowrap;left:225.70px;width:400px;text-align:right;">32.9300</div>
<div style="position:absolute;top:624.95px;line-height:14px;font-size:10px;color:#333;white-space:nowrap;left:312.70px;width:400px;text-align:right;">502.7313</div>
<div style="position:absolute;left:164.00px;top:641.70px;width:557.00px;height:18.00px;background:#fafafa;"></div>
<div style="position:absolute;left:164.00px;top:659.70px;width:557.00px;height:1.00px;background:#ddd;"></div>
<div style="position:absolute;top:644.50px;line-height:14px;font-size:10px;color:#333;white-space:nowrap;left:172.00px;">Regular 1</div>
<div style="position:absolute;top:644.50px;line-height:14px;font-size:10px;color:#333;white-space:nowrap;left:258.70px;">Cedar Springs, Zone C, Nursing Medicare Distinct,...</div>
<div style="position:absolute;top:644.50px;line-height:14px;font-size:10px;color:#333;white-space:nowrap;left:156.70px;width:400px;text-align:right;">15:18</div>
<div style="position:absolute;top:644.50px;line-height:14px;font-size:10px;color:#333;white-space:nowrap;left:225.70px;width:400px;text-align:right;">32.9300</div>
<div style="position:absolute;top:644.50px;line-height:14px;font-size:10px;color:#333;white-space:nowrap;left:312.70px;width:400px;text-align:right;">503.8290</div>
<div style="position:absolute;left:164.00px;top:679.00px;width:557.00px;height:1.00px;background:#ddd;"></div>
<div style="position:absolute;top:663.65px;line-height:14px;font-size:10px;color:#333;white-space:nowrap;left:172.00px;">Holiday</div>
<div style="position:absolute;top:663.65px;line-height:14px;font-size:10px;color:#333;white-space:nowrap;left:258.70px;">Cedar Springs, Default, Nursing Medicare Distinct,...</div>
<div style="position:absolute;top:663.65px;line-height:14px;font-size:10px;color:#333;white-space:nowrap;left:156.70px;width:400px;text-align:right;">8:00</div>
<div style="position:absolute;top:663.65px;line-height:14px;font-size:10px;color:#333;white-space:nowrap;left:225.70px;width:400px;text-align:right;">32.9300</div>
<div style="position:absolute;top:663.65px;line-height:14px;font-size:10px;color:#333;white-space:nowrap;left:312.70px;width:400px;text-align:right;">263.4400</div>
<div style="position:absolute;left:164.00px;top:680.00px;width:557.00px;height:18.30px;background:#fafafa;"></div>
<div style="position:absolute;left:164.00px;top:698.30px;width:557.00px;height:1.00px;background:#ddd;"></div>
<div style="position:absolute;top:682.95px;line-height:14px;font-size:10px;color:#333;white-space:nowrap;left:172.00px;">Hol Worked</div>
<div style="position:absolute;top:682.95px;line-height:14px;font-size:10px;color:#333;white-space:nowrap;left:258.70px;">Cedar Springs, Zone B, Nursing Medicare Distinct,...</div>
<div style="position:absolute;top:682.95px;line-height:14px;font-size:10px;color:#333;white-space:nowrap;left:156.70px;width:400px;text-align:right;">7:38</div>
<div style="position:absolute;top:682.95px;line-height:14px;font-size:10px;color:#333;white-space:nowrap;left:225.70px;width:400px;text-align:right;">49.3950</div>
<div style="position:absolute;top:682.95px;line-height:14px;font-size:10px;color:#333;white-space:nowrap;left:312.70px;width:400px;text-align:right;">377.0485</div>
<div style="position:absolute;left:164.00px;top:717.30px;width:557.00px;height:1.00px;background:#ddd;"></div>
<div style="position:absolute;top:702.10px;line-height:14px;font-size:10px;color:#333;white-space:nowrap;left:172.00px;">Totals</div>
<div style="position:absolute;top:702.10px;line-height:14px;font-size:10px;color:#333;white-space:nowrap;left:258.70px;"></div>
<div style="position:absolute;top:702.10px;line-height:14px;font-size:10px;color:#333;white-space:nowrap;left:156.70px;width:400px;text-align:right;">46:12</div>
<div style="position:absolute;top:702.10px;line-height:14px;font-size:10px;color:#333;white-space:nowrap;left:225.70px;width:400px;text-align:right;"></div>
<div style="position:absolute;top:702.10px;line-height:14px;font-size:10px;color:#333;white-space:nowrap;left:312.70px;width:400px;text-align:right;">1647.0490</div>
<div style="position:absolute;left:1257.00px;top:568.00px;width:1.00px;height:202.50px;background:#d6d6d6;"></div>
<div style="position:absolute;left:1258.00px;top:81.00px;width:231.00px;height:689.50px;box-sizing:border-box;border:1px solid #d8d8d8;border-bottom:none;border-left:1px solid #d0d0d0;background:#fff;"></div>
<div style="position:absolute;top:95.00px;line-height:14px;font-size:10px;color:#666;white-space:nowrap;left:1307.00px;">Find:</div>
<div style="position:absolute;left:1341.20px;top:92.20px;width:104.60px;height:18.20px;box-sizing:border-box;border:1px solid #ccc;background:#fff;"></div>
<div style="position:absolute;top:94.50px;line-height:14px;font-size:10.4px;color:#777;white-space:nowrap;letter-spacing:-0.201px;left:1346.60px;">Search Employee</div>
<svg style="position:absolute;left:1269.00px;top:126.00px;" width="30" height="34" viewBox="0 0 30 34"><defs><radialGradient id="sk" cx="45%" cy="45%" r="65%"><stop offset="0" stop-color="#f8ddd2"/><stop offset="0.700" stop-color="#eec3b1"/><stop offset="1" stop-color="#c99380"/></radialGradient>
<linearGradient id="hr" x1="0" y1="0" x2="1" y2="1"><stop offset="0" stop-color="#6b4636"/><stop offset="0.500" stop-color="#4f3024"/><stop offset="1" stop-color="#5e3b2d"/></linearGradient></defs>
<path d="M15.800 2.300C19 2.300 21.300 3.700 22.500 5.300C23.800 6.600 24.500 7.800 24.800 9C26 11.500 26 14 26.300 16.500C26.800 20.500 27.800 24 27.800 27.800C27.800 29.800 27.300 31 26.300 31.500C24 32.100 21.500 31.900 19.500 31.900L13.500 31.500C11 31.500 8.200 31.500 6 30.800C3.800 29.800 2.300 27.800 2.300 25.500C2.100 22.500 3.400 20 3 16.500C2.800 13.500 3.800 11 4.900 9C6 6.500 7.800 4.800 9.800 3.800C11.800 2.800 13.800 2.300 15.800 2.300Z" fill="url(#hr)"/>
<path d="M13.300 25.500l5.400 0.500 0.500 5.900-6.500-0.300z" fill="#e2b29e"/>
<ellipse cx="15" cy="18" rx="6" ry="8.800" transform="rotate(10 15 18)" fill="url(#sk)"/>
<path d="M8.600 17.500C9 12.500 11.500 8.800 15.800 8.600C19.500 8.500 21.800 11 22.300 15.500C20.500 13.500 18.500 11.200 16.500 10.500C13.500 11 10.500 13.800 8.600 17.500Z" fill="#5a382a"/>
<path d="M11.600 22.600c1.600 1.300 3.600 1.500 5.600 0.300-0.900 2.300-4.600 2.500-5.600-0.300z" fill="#fff" stroke="#c27a74" stroke-width="0.500"/>
<ellipse cx="11.700" cy="16.400" rx="1.100" ry="0.600" fill="#4a4a5e"/><ellipse cx="17.200" cy="17" rx="1.100" ry="0.600" fill="#4a4a5e"/>
<path d="M14.200 17.500l-0.600 3 1.400 0.300" fill="none" stroke="#d9a896" stroke-width="0.400"/></svg>
<div style="position:absolute;top:123.70px;line-height:14px;font-size:11px;color:#111;white-space:nowrap;font-weight:bold;left:1308.40px;">Fiona</div>
<div style="position:absolute;top:137.20px;line-height:14px;font-size:10px;color:#222;white-space:nowrap;letter-spacing:-0.473px;left:1308.40px;">Anderson</div>
<div style="position:absolute;left:1308.400px;top:150px;width:179.600px;height:14px;overflow:hidden">
<div style="position:absolute;top:0.00px;line-height:14px;font-size:8.5px;color:#333;white-space:nowrap;left:0.00px;">Cedar Springs-Default-Nursing Medicare Distinct-Registered Nurse</div>
</div>
<div style="position:absolute;top:123.70px;line-height:14px;font-size:5.8px;color:#aaa;white-space:nowrap;left:1084.00px;width:400px;text-align:right;">SMS</div>
<svg style="position:absolute;left:1266.80px;top:164.00px;" width="36" height="8" viewBox="0 0 36 8"><path transform="translate(0 0)" d="M3.500 0.300l1 2.200 2.400 0.300-1.800 1.600 0.500 2.400-2.100-1.200-2.100 1.200 0.500-2.400L0.100 2.800l2.400-0.300z" fill="#ee7a22"/><path transform="translate(7 0)" d="M3.500 0.300l1 2.200 2.400 0.300-1.800 1.600 0.500 2.400-2.100-1.200-2.100 1.200 0.500-2.400L0.100 2.800l2.400-0.300z" fill="#d2d5d9"/><path transform="translate(14 0)" d="M3.500 0.300l1 2.200 2.400 0.300-1.800 1.600 0.500 2.400-2.100-1.200-2.100 1.200 0.500-2.400L0.100 2.800l2.400-0.300z" fill="#d2d5d9"/><path transform="translate(21 0)" d="M3.500 0.300l1 2.200 2.400 0.300-1.800 1.600 0.500 2.400-2.100-1.200-2.100 1.200 0.500-2.400L0.100 2.800l2.400-0.300z" fill="#d2d5d9"/><path transform="translate(28 0)" d="M3.500 0.300l1 2.200 2.400 0.300-1.800 1.600 0.500 2.400-2.100-1.200-2.100 1.200 0.500-2.400L0.100 2.800l2.400-0.300z" fill="#d2d5d9"/></svg>
<div style="position:absolute;left:1397.70px;top:180.00px;width:85.60px;height:23.90px;box-sizing:border-box;border:1px solid #dcdcdc;background:#f5f5f5;border-radius:3px;"></div>
<div style="position:absolute;top:185.15px;line-height:14px;font-size:10.9px;color:#555;white-space:nowrap;left:1407.20px;">Operation</div>
<svg style="position:absolute;left:1465.30px;top:189.55px;" width="10" height="6" viewBox="0 0 10 6"><path d="M1 1.2L5 4.6L9 1.2" fill="none" stroke="#888" stroke-width="0.9"/></svg>
<div style="position:absolute;left:1260.00px;top:209.00px;width:228.00px;height:1.00px;background:#ddd;"></div>
<div style="position:absolute;top:209.50px;line-height:14px;font-size:10.2px;color:#222;white-space:nowrap;letter-spacing:-0.130px;left:1268.20px;">No Messages</div>
<div style="position:absolute;left:1260.00px;top:715.00px;width:228.00px;height:1.00px;background:#ddd;"></div>
<div style="position:absolute;left:1275.20px;top:720.40px;width:154.00px;height:49.20px;box-sizing:border-box;border:1px solid #d4d4d4;background:#fff;"></div>
<div style="position:absolute;left:1441.60px;top:735.00px;width:43.80px;height:24.40px;background:#3a8fd6;border-radius:2.500px;"></div>
<div style="position:absolute;top:741.40px;line-height:14px;font-size:10.7px;color:#fff;white-space:nowrap;letter-spacing:0.144px;left:1263.30px;width:400px;text-align:center;">Send</div>
</body></html>
